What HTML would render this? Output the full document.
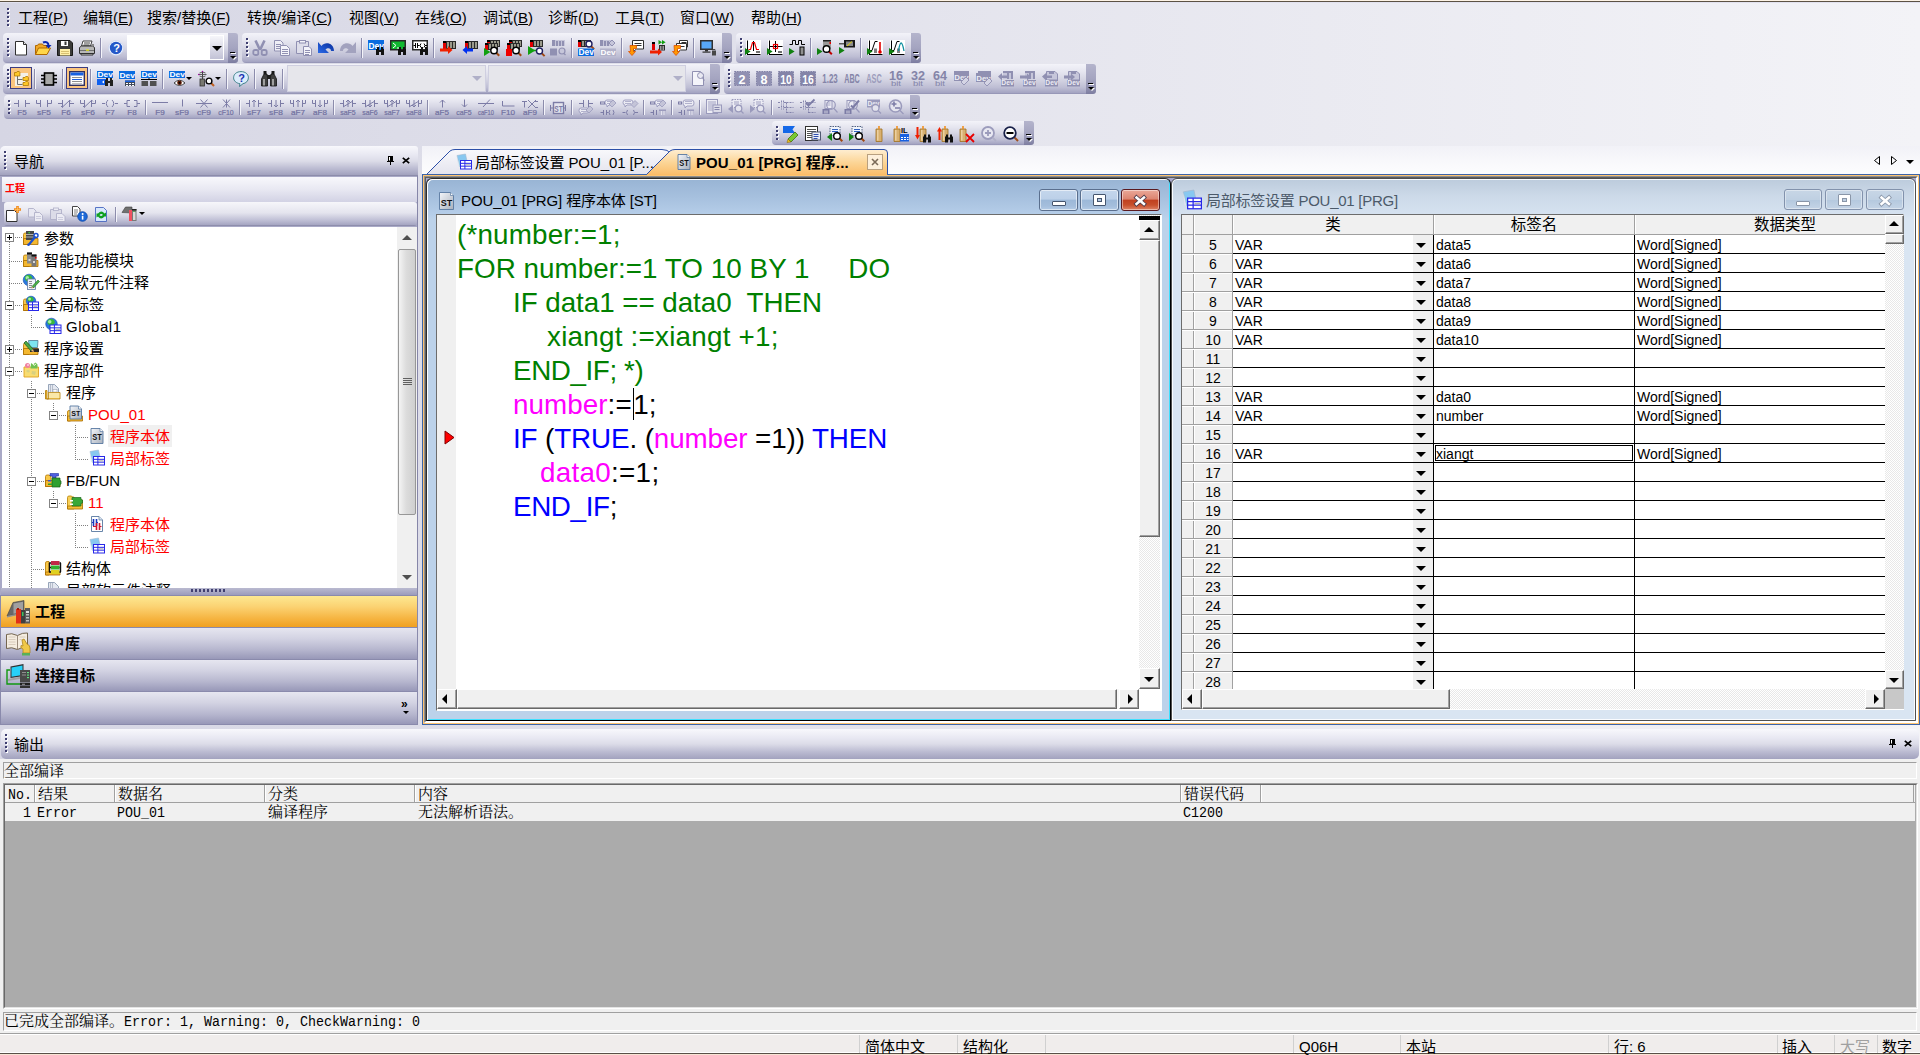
<!DOCTYPE html>
<html lang="zh-CN"><head><meta charset="utf-8"><title>GX Works2</title><style>
html,body{margin:0;padding:0;}
body{width:1920px;height:1055px;overflow:hidden;position:relative;background:linear-gradient(to right,#d6d6e4 0%,#f3f3f7 100%);font-family:"Liberation Sans","Noto Sans CJK SC",sans-serif;font-size:15px;color:#000;}
div{position:absolute;box-sizing:border-box;}
svg{position:absolute;overflow:visible;}
.gt{font-size:14px;letter-spacing:0px}
.t{white-space:pre;line-height:22px;height:22px;}
.tb{background:linear-gradient(to bottom,#f3f3f9 0%,#e6e6f0 25%,#d6d6e4 50%,#bebed4 78%,#a4a4c2 96%,#8e8eb0 100%);border-radius:4px 0 0 4px;}
.tbend{background:linear-gradient(to bottom,#b4b4cc 0%,#a4a4c0 50%,#8c8cac 85%,#7c7ca0 100%);border-radius:0 3px 3px 0;}
.grip{width:3px;background-image:repeating-linear-gradient(to bottom,#3e3e70 0,#3e3e70 2px,transparent 2px,transparent 4px),repeating-linear-gradient(to bottom,transparent 0,transparent 1px,#fff 1px,#fff 3px,transparent 3px,transparent 4px);background-size:2px 100%,2px 100%;background-position:0 0,1px 0;background-repeat:no-repeat;}
.sep{width:2px;background:linear-gradient(to right,#8c8cac 0 1px,#f4f4fa 1px 2px);}
.code{font-family:"Liberation Sans",sans-serif;font-size:27.8px;line-height:36px;height:34px;white-space:pre;}
.g{color:#008000}.b{color:#0000ff}.m{color:#ff00ff}.k{color:#000}
.ui{font-family:"Liberation Sans","Noto Sans CJK SC",sans-serif;}
.song{font-family:"Liberation Mono","Noto Serif CJK SC",serif;font-size:15px;white-space:pre;line-height:21px;height:21px;}
.song i{font-style:normal;font-size:13.33px;display:inline-block;transform:scaleY(1.15);transform-origin:50% 74%;}
</style></head><body>
<div style="left:0px;top:0px;width:1920px;height:1px;background:#fdf3e6"></div>
<div style="left:0px;top:1px;width:1920px;height:1px;background:#5c5244"></div>
<div style="left:0px;top:2px;width:1920px;height:1px;background:#e2e2f0"></div>
<div class="grip" style="left:7px;top:8px;width:3px;height:19px;"></div>
<div class="t menu" style="left:18px;top:7px;">工程(<u>P</u>)</div>
<div class="t menu" style="left:83px;top:7px;">编辑(<u>E</u>)</div>
<div class="t menu" style="left:147px;top:7px;">搜索/替换(<u>F</u>)</div>
<div class="t menu" style="left:247px;top:7px;">转换/编译(<u>C</u>)</div>
<div class="t menu" style="left:349px;top:7px;">视图(<u>V</u>)</div>
<div class="t menu" style="left:415px;top:7px;">在线(<u>O</u>)</div>
<div class="t menu" style="left:483px;top:7px;">调试(<u>B</u>)</div>
<div class="t menu" style="left:548px;top:7px;">诊断(<u>D</u>)</div>
<div class="t menu" style="left:615px;top:7px;">工具(<u>T</u>)</div>
<div class="t menu" style="left:680px;top:7px;">窗口(<u>W</u>)</div>
<div class="t menu" style="left:751px;top:7px;">帮助(<u>H</u>)</div>
<div class="tb" style="left:3px;top:33px;width:225px;height:30px;"></div>
<div class="tbend" style="left:228px;top:33px;width:10px;height:30px;"><div style="left:2px;top:19px;width:5px;height:1px;background:#000"></div><div style="left:3px;top:20px;width:5px;height:1px;background:#fff"></div><div style="left:3px;top:24px;width:0;height:0;border-left:3px solid transparent;border-right:3px solid transparent;border-top:3px solid #fff"></div><div style="left:2px;top:23px;width:0;height:0;border-left:3px solid transparent;border-right:3px solid transparent;border-top:3px solid #000"></div></div>
<div class="grip" style="left:7px;top:38px;width:3px;height:20px;"></div>
<svg style="left:13px;top:40px" width="16" height="16" viewBox="0 0 16 16"><path d="M2.5 1.5h8l3 3v10.5h-11z" fill="#fff" stroke="#303030" stroke-width="1" /><path d="M10.5 1.5v3h3" fill="#e8e8e8" stroke="#303030" stroke-width="1" /></svg>
<svg style="left:35px;top:40px" width="16" height="16" viewBox="0 0 16 16"><path d="M0.5 14.5v-9h2l1-1.5h4l1 1.5h3v3" fill="#f0a828" stroke="#b06800" stroke-width="1" /><path d="M0.5 14.5l3-6.5h12l-3.5 6.5z" fill="#ffd64a" stroke="#b06800" stroke-width="1" /><path d="M8 2.5c3-1.5 5.5 0 5.5 3" fill="none" stroke="#0828b0" stroke-width="2" /><path d="M10.5 5h6l-3 3.5z" fill="#0828b0" stroke="none" stroke-width="1" /></svg>
<svg style="left:57px;top:40px" width="16" height="16" viewBox="0 0 16 16"><path d="M0.5 0.5h12.5l2.5 2.5v12.5h-15z" fill="#3a3a38" stroke="#181818" stroke-width="1" /><rect x="4" y="1" width="7" height="5" fill="#fff" /><rect x="7.5" y="1.5" width="2" height="3.5" fill="#3a3a38" /><rect x="3" y="9" width="10" height="6.5" fill="#fff0a8" /><rect x="4" y="11" width="8" height="1" fill="#d8c070" /><rect x="4" y="13" width="8" height="1" fill="#d8c070" /></svg>
<svg style="left:79px;top:40px" width="16" height="16" viewBox="0 0 16 16"><path d="M4 1h9l-1.5 5h-9z" fill="#fff" stroke="#404040" stroke-width="1" /><path d="M5 3h6M4.5 5h6" fill="none" stroke="#404040" stroke-width="1" /><path d="M0.5 7.5l2-1.5h11l2 1.5v6h-15z" fill="#b8b8b8" stroke="#303030" stroke-width="1" /><rect x="1" y="10" width="14" height="1" fill="#707070" /><rect x="7" y="9.5" width="3" height="1.2" fill="#f0f000" /><path d="M2 13.5h12v1.5h-12z" fill="#d8d8d8" stroke="#303030" stroke-width="1" /><rect x="13" y="4" width="2" height="2" fill="#888" /></svg>
<div class="sep" style="left:100px;top:38px;width:2px;height:20px;"></div>
<svg style="left:108px;top:40px" width="16" height="16" viewBox="0 0 16 16"><circle cx="8" cy="8" r="7.3" fill="#fff" stroke="#c8d4f0" stroke-width="0.8"/><circle cx="8" cy="8" r="6.2" fill="#2458c8" stroke="none" stroke-width="1"/><text x="5.2" y="12" font-family="Liberation Sans,sans-serif" font-size="11" fill="#fff" font-weight="bold">?</text></svg>
<div style="left:127px;top:35px;width:97px;height:25px;background:#fff"></div>
<div style="left:210px;top:36px;width:13px;height:23px;background:linear-gradient(to bottom,#f6f6fa,#dcdce8 50%,#c2c2d6)"></div>
<div style="left:212px;top:46px;width:0px;height:0px;border-left:5px solid transparent;border-right:5px solid transparent;border-top:5px solid #000;width:0;height:0"></div>
<div class="tb" style="left:242px;top:33px;width:480px;height:30px;"></div>
<div class="tbend" style="left:722px;top:33px;width:10px;height:30px;"><div style="left:2px;top:19px;width:5px;height:1px;background:#000"></div><div style="left:3px;top:20px;width:5px;height:1px;background:#fff"></div><div style="left:3px;top:24px;width:0;height:0;border-left:3px solid transparent;border-right:3px solid transparent;border-top:3px solid #fff"></div><div style="left:2px;top:23px;width:0;height:0;border-left:3px solid transparent;border-right:3px solid transparent;border-top:3px solid #000"></div></div>
<div class="grip" style="left:246px;top:38px;width:3px;height:20px;"></div>
<svg style="left:252px;top:40px" width="16" height="16" viewBox="0 0 16 16"><path d="M3.500 0.500l4.500 9.500M12.500 0.500l-4.500 9.500" fill="none" stroke="#9090b2" stroke-width="2.6" /><rect x="1.3" y="10" width="5" height="5" fill="none" rx="1.800" stroke="#9090b2" stroke-width="1.800"/><rect x="9.7" y="10" width="5" height="5" fill="none" rx="1.800" stroke="#9090b2" stroke-width="1.800"/></svg>
<svg style="left:274px;top:40px" width="16" height="16" viewBox="0 0 16 16"><path d="M0.5 0.5h6l2.5 2.5v8h-8.5z" fill="#eeeef6" stroke="#9090b2" stroke-width="1" /><path d="M2 4.500h5M2 6.500h5M2 8.500h4" fill="none" stroke="#9090b2" stroke-width="1" /><path d="M6.5 5.5h6l3 3v7h-9z" fill="#f4f4fa" stroke="#9090b2" stroke-width="1" /><path d="M8 9.500h6M8 11.500h6M8 13.500h6" fill="none" stroke="#9090b2" stroke-width="1" /></svg>
<svg style="left:296px;top:40px" width="16" height="16" viewBox="0 0 16 16"><path d="M0.5 1.5h12v12h-12z" fill="#dedeea" stroke="#9090b2" stroke-width="1" /><rect x="3.5" y="0.5" width="6" height="2.5" fill="#f4f4fa" stroke="#9090b2"/><path d="M7.5 6.5h5.5l2.5 2.5v6.5h-8z" fill="#f4f4fa" stroke="#9090b2" stroke-width="1" /><path d="M9 10.500h5M9 12.500h5M9 14.500h4" fill="none" stroke="#9090b2" stroke-width="1" /></svg>
<svg style="left:318px;top:40px" width="16" height="16" viewBox="0 0 16 16"><defs><linearGradient id="ug" x1="0" y1="1" x2="1" y2="0"><stop offset="0" stop-color="#2a6ae8"/><stop offset="1" stop-color="#082c98"/></linearGradient></defs><path d="M0 2v11h11l-3.500-3.500c2-2.200 5.500-1.800 5.500 1.500h3c0-8-9-10-12.500-5z" fill="url(#ug)" stroke="none" stroke-width="1" /></svg>
<svg style="left:340px;top:40px" width="16" height="16" viewBox="0 0 16 16"><path d="M16 2v11h-11l3.500-3.500c-2-2.200-5.500-1.800-5.500 1.500h-3c0-8 9-10 12.500-5z" fill="#a2a2be" stroke="none" stroke-width="1" /></svg>
<div class="sep" style="left:361px;top:38px;width:2px;height:20px;"></div>
<svg style="left:368px;top:40px" width="16" height="16" viewBox="0 0 16 16"><rect x="0" y="0" width="16" height="10" fill="#0a6be0" /><text x="0.5" y="8.7" font-family="Liberation Sans,sans-serif" font-size="8.5" fill="#fff" font-weight="bold" textLength="15.4" lengthAdjust="spacingAndGlyphs">Dev</text><rect x="8" y="9" width="3" height="6" fill="#111" /><rect x="13" y="9" width="3" height="6" fill="#111" /><rect x="9" y="7" width="2" height="3" fill="#111" /><rect x="13" y="7" width="2" height="3" fill="#111" /><rect x="11" y="10" width="2" height="2" fill="#111" /></svg>
<svg style="left:390px;top:40px" width="16" height="16" viewBox="0 0 16 16"><rect x="0" y="0" width="16" height="10.5" fill="#282828" /><rect x="1.5" y="1.5" width="13" height="7.5" fill="#10b830" /><path d="M3 3l3 2.5l-3 2.5M7 8h4" fill="none" stroke="#fff" stroke-width="1" /><rect x="8" y="9" width="3" height="6" fill="#111" /><rect x="13" y="9" width="3" height="6" fill="#111" /><rect x="9" y="7" width="2" height="3" fill="#111" /><rect x="13" y="7" width="2" height="3" fill="#111" /><rect x="11" y="10" width="2" height="2" fill="#111" /></svg>
<svg style="left:412px;top:40px" width="16" height="16" viewBox="0 0 16 16"><rect x="0" y="0" width="16" height="10.5" fill="#282828" /><rect x="1.5" y="1.5" width="13" height="7.5" fill="#fff" /><path d="M1.500 5.500h2M3.500 3v5M5.500 3v5M5.500 5.500h2M9 3.500q-2 2 0 4M12 3.500q2 2 0 4M13 5.500h2" fill="none" stroke="#000" stroke-width="1" /><rect x="8" y="9" width="3" height="6" fill="#111" /><rect x="13" y="9" width="3" height="6" fill="#111" /><rect x="9" y="7" width="2" height="3" fill="#111" /><rect x="13" y="7" width="2" height="3" fill="#111" /><rect x="11" y="10" width="2" height="2" fill="#111" /></svg>
<div class="sep" style="left:433px;top:38px;width:2px;height:20px;"></div>
<svg style="left:440px;top:40px" width="16" height="16" viewBox="0 0 16 16"><rect x="3" y="1" width="13" height="8" fill="#2a2a2a" /><rect x="3" y="3" width="3" height="6" fill="#e00000" /><rect x="3" y="1" width="3" height="2" fill="#000" /><rect x="7" y="2" width="2" height="6" fill="#9a9a8c" /><rect x="10" y="2" width="2" height="6" fill="#9a9a8c" /><rect x="13" y="2" width="2" height="6" fill="#9a9a8c" /><path d="M0 8.500h8v-2.500l4.500 4l-4.500 4v-2.500h-8z" fill="#f02000" stroke="none" stroke-width="1" /></svg>
<svg style="left:462px;top:40px" width="16" height="16" viewBox="0 0 16 16"><rect x="3" y="1" width="13" height="8" fill="#2a2a2a" /><rect x="3" y="3" width="3" height="6" fill="#e00000" /><rect x="3" y="1" width="3" height="2" fill="#000" /><rect x="7" y="2" width="2" height="6" fill="#9a9a8c" /><rect x="10" y="2" width="2" height="6" fill="#9a9a8c" /><rect x="13" y="2" width="2" height="6" fill="#9a9a8c" /><path d="M11 8.500h-6v-2.500l-4.500 4l4.500 4v-2.500h6z" fill="#0030f0" stroke="none" stroke-width="1" /></svg>
<svg style="left:484px;top:40px" width="16" height="16" viewBox="0 0 16 16"><rect x="3" y="0" width="13" height="7" fill="#2a2a2a" /><rect x="3" y="2" width="3" height="5" fill="#e00000" /><rect x="3" y="0" width="3" height="2" fill="#000" /><rect x="7" y="1" width="2" height="5" fill="#9a9a8c" /><rect x="10" y="1" width="2" height="5" fill="#9a9a8c" /><rect x="13" y="1" width="2" height="5" fill="#9a9a8c" /><rect x="1" y="3" width="13" height="7" fill="#2a2a2a" /><rect x="1" y="5" width="3" height="5" fill="#e00000" /><rect x="1" y="3" width="3" height="2" fill="#000" /><rect x="5" y="4" width="2" height="5" fill="#9a9a8c" /><rect x="8" y="4" width="2" height="5" fill="#9a9a8c" /><rect x="11" y="4" width="2" height="5" fill="#9a9a8c" /><path d="M0 8v8l6.4 -4.0z" fill="#10a010" stroke="none" stroke-width="1" /><path d="M12.24 12.74l3 3" fill="none" stroke="#a04810" stroke-width="2" /><circle cx="10" cy="10.5" r="3.2" fill="#fff" stroke="#000" stroke-width="1.4"/></svg>
<svg style="left:506px;top:40px" width="16" height="16" viewBox="0 0 16 16"><rect x="3" y="0" width="13" height="7" fill="#2a2a2a" /><rect x="3" y="2" width="3" height="5" fill="#e00000" /><rect x="3" y="0" width="3" height="2" fill="#000" /><rect x="7" y="1" width="2" height="5" fill="#9a9a8c" /><rect x="10" y="1" width="2" height="5" fill="#9a9a8c" /><rect x="13" y="1" width="2" height="5" fill="#9a9a8c" /><rect x="1" y="3" width="13" height="7" fill="#2a2a2a" /><rect x="1" y="5" width="3" height="5" fill="#e00000" /><rect x="1" y="3" width="3" height="2" fill="#000" /><rect x="5" y="4" width="2" height="5" fill="#9a9a8c" /><rect x="8" y="4" width="2" height="5" fill="#9a9a8c" /><rect x="11" y="4" width="2" height="5" fill="#9a9a8c" /><rect x="0" y="9" width="6" height="7" fill="#f00000" /><path d="M12.24 12.74l3 3" fill="none" stroke="#a04810" stroke-width="2" /><circle cx="10" cy="10.5" r="3.2" fill="#fff" stroke="#000" stroke-width="1.4"/></svg>
<svg style="left:528px;top:40px" width="16" height="16" viewBox="0 0 16 16"><rect x="2" y="0" width="13" height="7" fill="#2a2a2a" /><rect x="2" y="2" width="3" height="5" fill="#e00000" /><rect x="2" y="0" width="3" height="2" fill="#000" /><rect x="6" y="1" width="2" height="5" fill="#9a9a8c" /><rect x="9" y="1" width="2" height="5" fill="#9a9a8c" /><rect x="12" y="1" width="2" height="5" fill="#9a9a8c" /><path d="M0 6v9l7.2 -4.5z" fill="#10a010" stroke="none" stroke-width="1" /><path d="M5 10.500h4" fill="none" stroke="#10a010" stroke-width="1.5" /><path d="M13.6 13.1l3 3" fill="none" stroke="#a04810" stroke-width="2" /><circle cx="11.5" cy="11" r="3" fill="#fff" stroke="#202060" stroke-width="1.4"/></svg>
<svg style="left:550px;top:40px" width="16" height="16" viewBox="0 0 16 16"><rect x="2" y="0" width="13" height="6" fill="#c6c6da" /><rect x="2" y="0" width="3" height="6" fill="#9090b2" /><rect x="6" y="1" width="2" height="5" fill="#9090b2" /><rect x="9" y="1" width="2" height="5" fill="#9090b2" /><rect x="12" y="1" width="2" height="5" fill="#9090b2" /><rect x="0" y="8.5" width="7" height="7" fill="#9090b2" /><circle cx="12" cy="11" r="3" fill="#c6c6da" stroke="#9090b2" stroke-width="1.2"/><path d="M14 13.500l1.500 1.500" fill="none" stroke="#9090b2" stroke-width="1.2" /></svg>
<div class="sep" style="left:571px;top:38px;width:2px;height:20px;"></div>
<svg style="left:578px;top:40px" width="16" height="16" viewBox="0 0 16 16"><rect x="0" y="0" width="13" height="7" fill="#2a2a2a" /><rect x="0" y="2" width="3" height="5" fill="#e00000" /><rect x="0" y="0" width="3" height="2" fill="#000" /><rect x="4" y="1" width="2" height="5" fill="#9a9a8c" /><rect x="7" y="1" width="2" height="5" fill="#9a9a8c" /><rect x="10" y="1" width="2" height="5" fill="#9a9a8c" /><path d="M13.1 6.1l3 3" fill="none" stroke="#a04810" stroke-width="2" /><circle cx="11" cy="4" r="3" fill="#fff" stroke="#202060" stroke-width="1.4"/><rect x="0" y="8.5" width="16" height="7.5" fill="#0a6be0" /><text x="0.5" y="14.7" font-family="Liberation Sans,sans-serif" font-size="9" fill="#fff" font-weight="bold" textLength="15.4" lengthAdjust="spacingAndGlyphs">Dev</text></svg>
<svg style="left:600px;top:40px" width="16" height="16" viewBox="0 0 16 16"><rect x="0" y="0" width="12" height="6" fill="#c6c6da" /><rect x="0" y="0" width="3" height="6" fill="#9090b2" /><rect x="4" y="1" width="2" height="5" fill="#9090b2" /><rect x="7" y="1" width="2" height="5" fill="#9090b2" /><path d="M9 3l3-3l3 3l-3 3z" fill="#c6c6da" stroke="#9090b2" stroke-width="1" /><rect x="0" y="8.5" width="16" height="7.5" fill="#b2b2ca" /><text x="0.5" y="14.8" font-family="Liberation Sans,sans-serif" font-size="8" fill="#fff" font-weight="bold" textLength="15" lengthAdjust="spacingAndGlyphs">Dev</text></svg>
<div class="sep" style="left:621px;top:38px;width:2px;height:20px;"></div>
<svg style="left:628px;top:40px" width="16" height="16" viewBox="0 0 16 16"><path d="M4.5 0.5h11v8.5h-7l-3 2.500v-2.500h-1z" fill="#fff" stroke="#303030" stroke-width="1" /><path d="M6.500 3.500h7M6.500 5.500h7" fill="none" stroke="#303030" stroke-width="1" /><path d="M2 5.500h6.500v3h-3v3h2l-3.500 4l-3.500-4h2z" fill="#ff9800" stroke="#e05000" stroke-width="0.8" /></svg>
<svg style="left:650px;top:40px" width="16" height="16" viewBox="0 0 16 16"><rect x="2" y="3" width="3" height="7" fill="#e00000" /><rect x="2" y="2" width="3" height="2" fill="#000" /><rect x="9" y="5" width="6" height="5.5" fill="#2a2a2a" /><rect x="10" y="6" width="1.5" height="4" fill="#999" /><rect x="12.5" y="6" width="1.5" height="4" fill="#999" /><path d="M0 10.500h8v-2l4 3.500l-4 3.500v-2h-8z" fill="#f02000" stroke="none" stroke-width="1" /><path d="M8.5 0v4.5l3.6 -2.25z" fill="#10a010" stroke="none" stroke-width="1" /><path d="M12 0v4.5l3.6 -2.25z" fill="#10a010" stroke="none" stroke-width="1" /></svg>
<svg style="left:672px;top:40px" width="16" height="16" viewBox="0 0 16 16"><path d="M7.5 0.5h8v6.5h-4l-3 2.500v-2.500h-1z" fill="#fff" stroke="#303030" stroke-width="1" /><path d="M4.5 3.5h10v6.5h-6l-3 2.500v-2.500h-1z" fill="#fff" stroke="#303030" stroke-width="1" /><path d="M9.500 2.500h5M6.500 6.500h6" fill="none" stroke="#303030" stroke-width="1" /><path d="M2 5.500h6.500v3h-3v3h2l-3.500 4l-3.500-4h2z" fill="#ff9800" stroke="#e05000" stroke-width="0.8" /></svg>
<div class="sep" style="left:693px;top:38px;width:2px;height:20px;"></div>
<svg style="left:700px;top:40px" width="16" height="16" viewBox="0 0 16 16"><rect x="0" y="0" width="13" height="10" fill="#303030" /><rect x="1.5" y="1.5" width="10" height="7" fill="#58a8f8" /><rect x="5" y="10" width="3" height="1.5" fill="#303030" /><rect x="2.5" y="11.5" width="8" height="1.2" fill="#303030" /><path d="M12 11h4v4.500h-4z" fill="#484848" stroke="none" stroke-width="1" /><path d="M13 11v-1.500h2v1.500" fill="none" stroke="#484848" stroke-width="1" /></svg>
<div class="tb" style="left:736px;top:33px;width:175px;height:30px;"></div>
<div class="tbend" style="left:911px;top:33px;width:10px;height:30px;"><div style="left:2px;top:19px;width:5px;height:1px;background:#000"></div><div style="left:3px;top:20px;width:5px;height:1px;background:#fff"></div><div style="left:3px;top:24px;width:0;height:0;border-left:3px solid transparent;border-right:3px solid transparent;border-top:3px solid #fff"></div><div style="left:2px;top:23px;width:0;height:0;border-left:3px solid transparent;border-right:3px solid transparent;border-top:3px solid #000"></div></div>
<div class="grip" style="left:740px;top:38px;width:3px;height:20px;"></div>
<svg style="left:745px;top:40px" width="16" height="16" viewBox="0 0 16 16"><rect x="1" y="0" width="15" height="15" fill="#fff" /><path d="M2.500 0.500v14M2 14.500h13.500" fill="none" stroke="#000" stroke-width="1" /><path d="M8.500 1v10" fill="none" stroke="#000" stroke-width="1" /><path d="M3.500 9.500h2l2-7h2l2 7h2.500" fill="none" stroke="#f00000" stroke-width="1.2" /><path d="M0 8v7l5.6000000000000005 -3.5z" fill="#108010" stroke="none" stroke-width="1" /><rect x="11" y="11" width="4" height="2" fill="#707070" /></svg>
<svg style="left:767px;top:40px" width="16" height="16" viewBox="0 0 16 16"><rect x="1" y="0" width="15" height="15" fill="#fff" /><path d="M2.500 0.500v14M2 14.500h13.500" fill="none" stroke="#000" stroke-width="1" /><path d="M8.500 1v11M3 6.500h12.500" fill="none" stroke="#000" stroke-width="1" /><rect x="6.5" y="4.5" width="4" height="4" fill="none" stroke="#f00000" stroke-width="1.2"/><path d="M0 8v7l5.6000000000000005 -3.5z" fill="#108010" stroke="none" stroke-width="1" /><rect x="11" y="11" width="4" height="2" fill="#707070" /></svg>
<svg style="left:789px;top:40px" width="16" height="16" viewBox="0 0 16 16"><path d="M0.500 4.500h3v-4h3v4h3v-4h3v4h3.500" fill="none" stroke="#000" stroke-width="1" /><path d="M0 8v7l5.6000000000000005 -3.5z" fill="#108010" stroke="none" stroke-width="1" /><rect x="11" y="7" width="4" height="8" fill="#909090" stroke="#000"/></svg>
<div class="sep" style="left:810px;top:38px;width:2px;height:20px;"></div>
<svg style="left:817px;top:40px" width="16" height="16" viewBox="0 0 16 16"><rect x="6" y="0" width="8" height="9" fill="#9a9a9a" /><rect x="6" y="0" width="8" height="1.5" fill="#202020" /><rect x="12.5" y="2" width="1.5" height="2" fill="#e00000" /><path d="M0 8v7l5.6000000000000005 -3.5z" fill="#108010" stroke="none" stroke-width="1" /><path d="M11.809999999999999 11.309999999999999l3 3" fill="none" stroke="#c00000" stroke-width="2" /><circle cx="9.5" cy="9" r="3.3" fill="#fff" stroke="#000" stroke-width="1.4"/></svg>
<svg style="left:839px;top:40px" width="16" height="16" viewBox="0 0 16 16"><rect x="5" y="0" width="11" height="7.5" fill="#181818" /><rect x="7" y="1.5" width="7" height="4.5" fill="#8a8a8a" /><path d="M8 6l5-4.500" fill="none" stroke="#e0d000" stroke-width="1" /><rect x="0" y="3" width="5" height="1.5" fill="#585858" /><path d="M0 7v7l5.6000000000000005 -3.5z" fill="#108010" stroke="none" stroke-width="1" /></svg>
<div class="sep" style="left:860px;top:38px;width:2px;height:20px;"></div>
<svg style="left:867px;top:40px" width="16" height="16" viewBox="0 0 16 16"><rect x="1" y="0" width="15" height="15" fill="#fff" /><path d="M2.500 0.500v14M2 14.500h13.500" fill="none" stroke="#000" stroke-width="1" /><path d="M3 10.500h2l3-9h2.500" fill="none" stroke="#000" stroke-width="1" /><rect x="7" y="8.5" width="3" height="4.5" fill="#808080" /><path d="M13 2v9" fill="none" stroke="#e00000" stroke-width="1.6" /><circle cx="13" cy="12" r="1.8" fill="#e00000" stroke="none" stroke-width="1"/><path d="M0 8v7l5.6000000000000005 -3.5z" fill="#108010" stroke="none" stroke-width="1" /></svg>
<svg style="left:889px;top:40px" width="16" height="16" viewBox="0 0 16 16"><rect x="1" y="0" width="15" height="15" fill="#fff" /><path d="M2.500 0.500v14M2 14.500h13.500" fill="none" stroke="#000" stroke-width="1" /><path d="M3 10.500h2l3-9h2.500" fill="none" stroke="#000" stroke-width="1" /><rect x="8" y="8.5" width="3" height="4.5" fill="#808080" /><path d="M9.500 11q2.500-16 5.500 0" fill="none" stroke="#1090a0" stroke-width="1.3" /><path d="M0 8v7l5.6000000000000005 -3.5z" fill="#108010" stroke="none" stroke-width="1" /></svg>
<div class="tb" style="left:3px;top:64px;width:707px;height:30px;"></div>
<div class="tbend" style="left:710px;top:64px;width:10px;height:30px;"><div style="left:2px;top:19px;width:5px;height:1px;background:#000"></div><div style="left:3px;top:20px;width:5px;height:1px;background:#fff"></div><div style="left:3px;top:24px;width:0;height:0;border-left:3px solid transparent;border-right:3px solid transparent;border-top:3px solid #fff"></div><div style="left:2px;top:23px;width:0;height:0;border-left:3px solid transparent;border-right:3px solid transparent;border-top:3px solid #000"></div></div>
<div class="grip" style="left:7px;top:69px;width:3px;height:20px;"></div>
<div style="left:10px;top:67px;width:22px;height:22px;background:#fbc57e;border:1px solid #3c3c80"></div>
<div style="left:66px;top:67px;width:22px;height:22px;background:#fbc57e;border:1px solid #3c3c80"></div>
<svg style="left:14px;top:71px" width="16" height="16" viewBox="0 0 16 16"><rect x="1" y="2" width="13" height="13" fill="#f4f0e8" /><path d="M3.500 5v8.500h5M3.500 8.500h5" fill="none" stroke="#707070" stroke-width="1" /><path d="M0.500 1.500h2l0.700-1h2l0.700 1v3.500h-5.400z" fill="#ffc828" stroke="#b07800" stroke-width="0.8" /><path d="M9 6.500h2l0.700-1h2l0.700 1v3h-5.400z" fill="#ffc828" stroke="#b07800" stroke-width="0.8" /><path d="M9 11.500h2l0.700-1h2l0.700 1v3h-5.400z" fill="#ffc828" stroke="#b07800" stroke-width="0.8" /></svg>
<div class="sep" style="left:34px;top:69px;width:2px;height:20px;"></div>
<svg style="left:41px;top:71px" width="16" height="16" viewBox="0 0 16 16"><rect x="3.5" y="2" width="9" height="12" fill="#a8a8a8" stroke="#000" stroke-width="1.6"/><path d="M0 4.500h3M0 8h3M0 11.500h3M13 4.500h3M13 8h3M13 11.500h3" fill="none" stroke="#000" stroke-width="1.6" /></svg>
<div class="sep" style="left:62px;top:69px;width:2px;height:20px;"></div>
<svg style="left:69px;top:71px" width="16" height="16" viewBox="0 0 16 16"><rect x="0.7" y="0.7" width="14.6" height="13.6" fill="#fff" stroke="#303060" stroke-width="1.4"/><rect x="1.5" y="1.5" width="13" height="3" fill="#1860e0" /><path d="M3 6.500h10M3 10.500h10" fill="none" stroke="#909090" stroke-width="1" /><path d="M3 8.500h10" fill="none" stroke="#2060e0" stroke-width="1" /><path d="M3 12.500h10" fill="none" stroke="#c0c0c0" stroke-width="1" /></svg>
<div class="sep" style="left:90px;top:69px;width:2px;height:20px;"></div>
<svg style="left:97px;top:71px" width="16" height="16" viewBox="0 0 16 16"><rect x="0" y="0" width="16" height="7" fill="#0a6be0" /><text x="0.5" y="5.7" font-family="Liberation Sans,sans-serif" font-size="7.8" fill="#fff" font-weight="bold" textLength="15.4" lengthAdjust="spacingAndGlyphs">Dev</text><rect x="0" y="8" width="9" height="6" fill="#1060f0" /><path d="M5 11l2-1.500v3z" fill="#fff" stroke="none" stroke-width="1" /><rect x="8" y="9" width="3" height="6" fill="#202020" /><rect x="13" y="9" width="3" height="6" fill="#202020" /><rect x="9" y="7" width="2" height="3" fill="#202020" /><rect x="13" y="7" width="2" height="3" fill="#202020" /><rect x="11" y="10" width="2" height="2" fill="#202020" /></svg>
<svg style="left:119px;top:71px" width="16" height="16" viewBox="0 0 16 16"><rect x="0" y="0" width="16" height="8" fill="#0a6be0" /><text x="0.5" y="6.7" font-family="Liberation Sans,sans-serif" font-size="8" fill="#fff" font-weight="bold" textLength="15.4" lengthAdjust="spacingAndGlyphs">Dev</text><rect x="6" y="9.5" width="10" height="5.5" fill="#404858" /><rect x="6" y="9.5" width="10" height="1.5" fill="#1860e0" /><path d="M7 12.500h2M10 12.500h2M13 12.500h2M7 14.500h2M10 14.500h2M13 14.500h2" fill="none" stroke="#fff" stroke-width="1" /></svg>
<svg style="left:141px;top:71px" width="16" height="16" viewBox="0 0 16 16"><rect x="0" y="0" width="16" height="7" fill="#0a6be0" /><text x="0.5" y="5.7" font-family="Liberation Sans,sans-serif" font-size="7.8" fill="#fff" font-weight="bold" textLength="15.4" lengthAdjust="spacingAndGlyphs">Dev</text><path d="M8 7v2M0 8.500h16" fill="none" stroke="#000" stroke-width="1" /><rect x="0.5" y="10" width="6.5" height="5" fill="#505050" /><rect x="9" y="10" width="6.5" height="5" fill="#505050" /></svg>
<div class="sep" style="left:162px;top:69px;width:2px;height:20px;"></div>
<svg style="left:169px;top:71px" width="16" height="16" viewBox="0 0 16 16"><rect x="0" y="0" width="16" height="7" fill="#0a6be0" /><text x="0.5" y="5.7" font-family="Liberation Sans,sans-serif" font-size="7.8" fill="#fff" font-weight="bold" textLength="15.4" lengthAdjust="spacingAndGlyphs">Dev</text><path d="M5 12q5.500-5.500 11 0q-5.500 5-11 0z" fill="#fff" stroke="#303030" stroke-width="0.9" /><circle cx="10.5" cy="11.8" r="2.3" fill="#601800" stroke="none" stroke-width="1"/><circle cx="10.5" cy="11.8" r="1" fill="#000" stroke="none" stroke-width="1"/></svg>
<svg style="left:198px;top:71px" width="16" height="16" viewBox="0 0 16 16"><path d="M4.500 0v8" fill="none" stroke="#404040" stroke-width="1" /><path d="M0.500 3.500h8M1.500 2q3-2 6 0M1.500 5q3 2 6 0" fill="none" stroke="#505050" stroke-width="0.9" /><circle cx="4.5" cy="0.5" r="0.7" fill="#a000a0" stroke="none" stroke-width="1"/><circle cx="0.7" cy="3.5" r="0.7" fill="#a000a0" stroke="none" stroke-width="1"/><rect x="2" y="8" width="4.5" height="7" fill="#787870" stroke="#303030" stroke-width="0.8"/><path d="M13.03 12.03l3 3" fill="none" stroke="#c06020" stroke-width="2" /><circle cx="11" cy="10" r="2.9" fill="#fff" stroke="#000" stroke-width="1.4"/></svg>
<div class="sep" style="left:226px;top:69px;width:2px;height:20px;"></div>
<svg style="left:233px;top:71px" width="16" height="16" viewBox="0 0 16 16"><path d="M8 0.600c4.500 0 7.400 2.600 7.400 6.200c0 3.200-2.500 5.400-5.400 5.900l-3.500 2.800l0.400-2.800c-3.400-0.500-6.300-2.700-6.300-5.900c0-3.600 2.900-6.200 7.400-6.200z" fill="#dcecfc" stroke="#307880" stroke-width="0.9" /><text x="5.2" y="11" font-family="Liberation Sans,sans-serif" font-size="11" fill="#2030b0" font-weight="bold" font-family="Liberation Serif,serif">?</text></svg>
<div class="sep" style="left:254px;top:69px;width:2px;height:20px;"></div>
<svg style="left:261px;top:71px" width="16" height="16" viewBox="0 0 16 16"><path d="M0.500 15v-7l2.500-5h3l0.500 3v9z" fill="#404040" stroke="#101010" stroke-width="0.8" /><path d="M15.500 15v-7l-2.500-5h-3l-0.500 3v9z" fill="#404040" stroke="#101010" stroke-width="0.8" /><rect x="2.5" y="0" width="3" height="3" fill="#181818" /><rect x="10.5" y="0" width="3" height="3" fill="#181818" /><rect x="6" y="4" width="4" height="4" fill="#202020" /><rect x="2" y="8" width="2" height="6.5" fill="#a0a0a0" /><rect x="11" y="8" width="2" height="6.5" fill="#a0a0a0" /></svg>
<div class="sep" style="left:282px;top:69px;width:2px;height:20px;"></div>
<div style="left:186px;top:77px;width:0px;height:0px;border-left:3px solid transparent;border-right:3px solid transparent;border-top:3px solid #000;width:0;height:0"></div>
<div style="left:215px;top:77px;width:0px;height:0px;border-left:3px solid transparent;border-right:3px solid transparent;border-top:3px solid #000;width:0;height:0"></div>
<div style="left:287px;top:65px;width:199px;height:27px;background:#e6e6eb;border:1px solid #cfcfe0"></div>
<div style="left:488px;top:65px;width:198px;height:27px;background:#e6e6eb;border:1px solid #cfcfe0"></div>
<div style="left:472px;top:76px;width:0px;height:0px;border-left:5px solid transparent;border-right:5px solid transparent;border-top:5px solid #b0b0c8;width:0;height:0"></div>
<div style="left:673px;top:76px;width:0px;height:0px;border-left:5px solid transparent;border-right:5px solid transparent;border-top:5px solid #b0b0c8;width:0;height:0"></div>
<svg style="left:692px;top:71px" width="16" height="16" viewBox="0 0 16 16"><path d="M0.500 0.500h8l3 3v11h-11z" fill="#f4f4fa" stroke="#9090b2" stroke-width="1" /><circle cx="8.5" cy="4.5" r="3" fill="#e8e8f2" stroke="#9090b2" stroke-width="1"/><path d="M10.500 7l2 2.500" fill="none" stroke="#9090b2" stroke-width="1.2" /></svg>
<div class="tb" style="left:724px;top:64px;width:362px;height:30px;"></div>
<div class="tbend" style="left:1086px;top:64px;width:10px;height:30px;"><div style="left:2px;top:19px;width:5px;height:1px;background:#000"></div><div style="left:3px;top:20px;width:5px;height:1px;background:#fff"></div><div style="left:3px;top:24px;width:0;height:0;border-left:3px solid transparent;border-right:3px solid transparent;border-top:3px solid #fff"></div><div style="left:2px;top:23px;width:0;height:0;border-left:3px solid transparent;border-right:3px solid transparent;border-top:3px solid #000"></div></div>
<div class="grip" style="left:728px;top:69px;width:3px;height:20px;"></div>
<svg style="left:734px;top:71px" width="16" height="16" viewBox="0 0 16 16"><rect x="0.5" y="0.5" width="15" height="14" fill="#9090b2" stroke="#8484a8" stroke-dasharray="1.5 1" stroke-width="1"/><text x="8" y="12.5" font-family="Liberation Sans,sans-serif" font-size="12.5" fill="#fff" font-weight="bold" text-anchor="middle" textLength="7" lengthAdjust="spacingAndGlyphs">2</text></svg>
<svg style="left:756px;top:71px" width="16" height="16" viewBox="0 0 16 16"><rect x="0.5" y="0.5" width="15" height="14" fill="#9090b2" stroke="#8484a8" stroke-dasharray="1.5 1" stroke-width="1"/><text x="8" y="12.5" font-family="Liberation Sans,sans-serif" font-size="12.5" fill="#fff" font-weight="bold" text-anchor="middle" textLength="7" lengthAdjust="spacingAndGlyphs">8</text></svg>
<svg style="left:778px;top:71px" width="16" height="16" viewBox="0 0 16 16"><rect x="0.5" y="0.5" width="15" height="14" fill="#8484a8" stroke="#8484a8" stroke-dasharray="1.5 1" stroke-width="1"/><text x="8" y="12.5" font-family="Liberation Sans,sans-serif" font-size="12.5" fill="#fff" font-weight="bold" text-anchor="middle" textLength="11.5" lengthAdjust="spacingAndGlyphs">10</text></svg>
<svg style="left:800px;top:71px" width="16" height="16" viewBox="0 0 16 16"><rect x="0.5" y="0.5" width="15" height="14" fill="#8484a8" stroke="#8484a8" stroke-dasharray="1.5 1" stroke-width="1"/><text x="8" y="12.5" font-family="Liberation Sans,sans-serif" font-size="12.5" fill="#fff" font-weight="bold" text-anchor="middle" textLength="11.5" lengthAdjust="spacingAndGlyphs">16</text></svg>
<svg style="left:822px;top:71px" width="16" height="16" viewBox="0 0 16 16"><text x="8" y="12" font-family="Liberation Sans,sans-serif" font-size="12" fill="#8484a8" font-weight="bold" text-anchor="middle" textLength="15.500" lengthAdjust="spacingAndGlyphs">1.23</text></svg>
<svg style="left:844px;top:71px" width="16" height="16" viewBox="0 0 16 16"><text x="8" y="12" font-family="Liberation Sans,sans-serif" font-size="12" fill="#8484a8" font-weight="bold" text-anchor="middle" textLength="15.500" lengthAdjust="spacingAndGlyphs">ABC</text></svg>
<svg style="left:866px;top:71px" width="16" height="16" viewBox="0 0 16 16"><text x="8" y="12" font-family="Liberation Sans,sans-serif" font-size="12" fill="#9c9cbc" font-weight="bold" text-anchor="middle" textLength="15.500" lengthAdjust="spacingAndGlyphs">ASC</text></svg>
<svg style="left:888px;top:71px" width="16" height="16" viewBox="0 0 16 16"><text x="8" y="8.7" font-family="Liberation Sans,sans-serif" font-size="12.5" fill="#8484a8" font-weight="bold" text-anchor="middle" textLength="14" lengthAdjust="spacingAndGlyphs">16</text><text x="8" y="14.7" font-family="Liberation Sans,sans-serif" font-size="7.5" fill="#8484a8" text-anchor="middle" textLength="10" lengthAdjust="spacingAndGlyphs">bit</text></svg>
<svg style="left:910px;top:71px" width="16" height="16" viewBox="0 0 16 16"><text x="8" y="8.7" font-family="Liberation Sans,sans-serif" font-size="12.5" fill="#8484a8" font-weight="bold" text-anchor="middle" textLength="14" lengthAdjust="spacingAndGlyphs">32</text><text x="8" y="14.7" font-family="Liberation Sans,sans-serif" font-size="7.5" fill="#8484a8" text-anchor="middle" textLength="10" lengthAdjust="spacingAndGlyphs">bit</text></svg>
<svg style="left:932px;top:71px" width="16" height="16" viewBox="0 0 16 16"><text x="8" y="8.7" font-family="Liberation Sans,sans-serif" font-size="12.5" fill="#8484a8" font-weight="bold" text-anchor="middle" textLength="14" lengthAdjust="spacingAndGlyphs">64</text><text x="8" y="14.7" font-family="Liberation Sans,sans-serif" font-size="7.5" fill="#8484a8" text-anchor="middle" textLength="10" lengthAdjust="spacingAndGlyphs">bit</text></svg>
<svg style="left:954px;top:71px" width="16" height="16" viewBox="0 0 16 16"><rect x="0" y="0" width="15" height="10" fill="#9090b2" /><text x="0.3" y="8.8" font-family="Liberation Sans,sans-serif" font-size="8" fill="#ececf4" font-weight="bold" textLength="14.4" lengthAdjust="spacingAndGlyphs">Dev</text><path d="M7 11l5-5l3 3l-5 5z" fill="#d4d4e4" stroke="#9090b2" stroke-width="0.9" /></svg>
<svg style="left:976px;top:71px" width="16" height="16" viewBox="0 0 16 16"><rect x="2" y="0" width="13" height="3" fill="#9090b2" /><rect x="0" y="2" width="15" height="9" fill="#9090b2" /><text x="0.3" y="9.8" font-family="Liberation Sans,sans-serif" font-size="8" fill="#ececf4" font-weight="bold" textLength="14.4" lengthAdjust="spacingAndGlyphs">Dev</text><path d="M8 12l5-5l3 3l-5 5z" fill="#d4d4e4" stroke="#9090b2" stroke-width="0.9" /></svg>
<svg style="left:998px;top:71px" width="16" height="16" viewBox="0 0 16 16"><rect x="5" y="0" width="10" height="8" fill="#c6c6da" /><rect x="5" y="0" width="10" height="2" fill="#9090b2" /><rect x="9" y="0" width="2" height="8" fill="#9090b2" /><rect x="13" y="0" width="2" height="8" fill="#9090b2" /><path d="M0 5.500l4-3.500v2.500h6v2.500h-6v2.500z" fill="#9090b2" stroke="none" stroke-width="1" /><rect x="3" y="9" width="13" height="6.5" fill="#9090b2" /><text x="3.3" y="14.3" font-family="Liberation Sans,sans-serif" font-size="8" fill="#ececf4" font-weight="bold" textLength="12.4" lengthAdjust="spacingAndGlyphs">Dev</text></svg>
<svg style="left:1020px;top:71px" width="16" height="16" viewBox="0 0 16 16"><rect x="5" y="0" width="10" height="8" fill="#c6c6da" /><rect x="5" y="0" width="10" height="2" fill="#9090b2" /><rect x="9" y="0" width="2" height="8" fill="#9090b2" /><rect x="13" y="0" width="2" height="8" fill="#9090b2" /><path d="M0 4.500h7v-2l4 3.500l-4 3.500v-2h-7z" fill="#9090b2" stroke="none" stroke-width="1" /><rect x="3" y="9" width="13" height="6.5" fill="#9090b2" /><text x="3.3" y="14.3" font-family="Liberation Sans,sans-serif" font-size="8" fill="#ececf4" font-weight="bold" textLength="12.4" lengthAdjust="spacingAndGlyphs">Dev</text></svg>
<svg style="left:1042px;top:71px" width="16" height="16" viewBox="0 0 16 16"><path d="M4.500 0.500h8.500l2.500 2.500v6h-11z" fill="#c6c6da" stroke="#9090b2" stroke-width="1" /><rect x="7" y="0" width="5" height="3" fill="#9090b2" /><path d="M0 5.500l4-3.500v2.500h6v2.500h-6v2.500z" fill="#9090b2" stroke="none" stroke-width="1" /><rect x="3" y="9" width="13" height="6.5" fill="#9090b2" /><text x="3.3" y="14.3" font-family="Liberation Sans,sans-serif" font-size="8" fill="#ececf4" font-weight="bold" textLength="12.4" lengthAdjust="spacingAndGlyphs">Dev</text></svg>
<svg style="left:1064px;top:71px" width="16" height="16" viewBox="0 0 16 16"><path d="M4.500 0.500h8.500l2.500 2.500v6h-11z" fill="#c6c6da" stroke="#9090b2" stroke-width="1" /><rect x="7" y="0" width="5" height="3" fill="#9090b2" /><path d="M0 4.500h7v-2l4 3.500l-4 3.500v-2h-7z" fill="#9090b2" stroke="none" stroke-width="1" /><rect x="3" y="9" width="13" height="6.5" fill="#9090b2" /><text x="3.3" y="14.3" font-family="Liberation Sans,sans-serif" font-size="8" fill="#ececf4" font-weight="bold" textLength="12.4" lengthAdjust="spacingAndGlyphs">Dev</text></svg>
<div class="tb" style="left:4px;top:95px;width:906px;height:24px;"></div>
<div class="tbend" style="left:910px;top:95px;width:10px;height:24px;"><div style="left:2px;top:13px;width:5px;height:1px;background:#000"></div><div style="left:3px;top:14px;width:5px;height:1px;background:#fff"></div><div style="left:3px;top:18px;width:0;height:0;border-left:3px solid transparent;border-right:3px solid transparent;border-top:3px solid #fff"></div><div style="left:2px;top:17px;width:0;height:0;border-left:3px solid transparent;border-right:3px solid transparent;border-top:3px solid #000"></div></div>
<div class="grip" style="left:8px;top:100px;width:3px;height:14px;"></div>
<svg style="left:14px;top:95px" width="16" height="24" viewBox="0 0 16 24"><path d="M0 8.500h4.500M4.500 5v7M11.500 5v7M11.500 8.500h4.500" fill="none" stroke="#7c7ca6" stroke-width="1" /><text x="8" y="20" font-family="Liberation Sans,sans-serif" font-size="7.5" fill="#7070a0" text-anchor="middle" stroke="#7070a0" stroke-width="0.2" textLength="9.5" lengthAdjust="spacingAndGlyphs">F5</text></svg>
<svg style="left:36px;top:95px" width="16" height="24" viewBox="0 0 16 24"><path d="M0.500 5v3.500h4M4.500 5v7M11.500 5v7M11.500 8.500h4M15.500 5v3.500" fill="none" stroke="#7c7ca6" stroke-width="1" /><text x="8" y="20" font-family="Liberation Sans,sans-serif" font-size="7.5" fill="#7070a0" text-anchor="middle" stroke="#7070a0" stroke-width="0.2" textLength="14" lengthAdjust="spacingAndGlyphs">sF5</text></svg>
<svg style="left:58px;top:95px" width="16" height="24" viewBox="0 0 16 24"><path d="M0 8.500h4.500M4.500 5v7M11.500 5v7M11.500 8.500h4.500M4 12.500l8-7.500M3 11l1.500 1.500M11.500 5l1.500 1.500" fill="none" stroke="#7c7ca6" stroke-width="1" /><text x="8" y="20" font-family="Liberation Sans,sans-serif" font-size="7.5" fill="#7070a0" text-anchor="middle" stroke="#7070a0" stroke-width="0.2" textLength="9.5" lengthAdjust="spacingAndGlyphs">F6</text></svg>
<svg style="left:80px;top:95px" width="16" height="24" viewBox="0 0 16 24"><path d="M0.500 5v3.500h4M4.500 5v7M11.500 5v7M11.500 8.500h4M15.500 5v3.500M4 12.500l8-7.500M3 11l1.500 1.500M11.500 5l1.500 1.500" fill="none" stroke="#7c7ca6" stroke-width="1" /><text x="8" y="20" font-family="Liberation Sans,sans-serif" font-size="7.5" fill="#7070a0" text-anchor="middle" stroke="#7070a0" stroke-width="0.2" textLength="14" lengthAdjust="spacingAndGlyphs">sF6</text></svg>
<svg style="left:102px;top:95px" width="16" height="24" viewBox="0 0 16 24"><path d="M0 8.500h3M6 5q-3.500 3.500 0 7M10 5q3.500 3.500 0 7M13 8.500h3" fill="none" stroke="#7c7ca6" stroke-width="1" /><text x="8" y="20" font-family="Liberation Sans,sans-serif" font-size="7.5" fill="#7070a0" text-anchor="middle" stroke="#7070a0" stroke-width="0.2" textLength="9.5" lengthAdjust="spacingAndGlyphs">F7</text></svg>
<svg style="left:124px;top:95px" width="16" height="24" viewBox="0 0 16 24"><path d="M0 8.500h3M6 5.500h-3v6h3M10 5.500h3v6h-3M13 8.500h3" fill="none" stroke="#7c7ca6" stroke-width="1" /><text x="8" y="20" font-family="Liberation Sans,sans-serif" font-size="7.5" fill="#7070a0" text-anchor="middle" stroke="#7070a0" stroke-width="0.2" textLength="9.5" lengthAdjust="spacingAndGlyphs">F8</text></svg>
<div class="sep" style="left:145px;top:100px;width:2px;height:15px;"></div>
<svg style="left:152px;top:95px" width="16" height="24" viewBox="0 0 16 24"><path d="M0 7.500h16" fill="none" stroke="#7c7ca6" stroke-width="1" /><text x="8" y="20" font-family="Liberation Sans,sans-serif" font-size="7.5" fill="#7070a0" text-anchor="middle" stroke="#7070a0" stroke-width="0.2" textLength="9.5" lengthAdjust="spacingAndGlyphs">F9</text></svg>
<svg style="left:174px;top:95px" width="16" height="24" viewBox="0 0 16 24"><path d="M8.500 4.500v7" fill="none" stroke="#7c7ca6" stroke-width="1" /><text x="8" y="20" font-family="Liberation Sans,sans-serif" font-size="7.5" fill="#7070a0" text-anchor="middle" stroke="#7070a0" stroke-width="0.2" textLength="14" lengthAdjust="spacingAndGlyphs">sF9</text></svg>
<svg style="left:196px;top:95px" width="16" height="24" viewBox="0 0 16 24"><path d="M0 8.500h16M4.500 4.500l7 8M11.500 4.500l-7 8" fill="none" stroke="#7c7ca6" stroke-width="1" /><text x="8" y="20" font-family="Liberation Sans,sans-serif" font-size="7.5" fill="#7070a0" text-anchor="middle" stroke="#7070a0" stroke-width="0.2" textLength="14" lengthAdjust="spacingAndGlyphs">cF9</text></svg>
<svg style="left:218px;top:95px" width="16" height="24" viewBox="0 0 16 24"><path d="M8.500 4.500v8M5 4.500l7 8M12 4.500l-7 8" fill="none" stroke="#7c7ca6" stroke-width="1" /><text x="8" y="20" font-family="Liberation Sans,sans-serif" font-size="7.5" fill="#7070a0" text-anchor="middle" stroke="#7070a0" stroke-width="0.2" textLength="15.5" lengthAdjust="spacingAndGlyphs">cF10</text></svg>
<div class="sep" style="left:239px;top:100px;width:2px;height:15px;"></div>
<svg style="left:246px;top:95px" width="16" height="24" viewBox="0 0 16 24"><path d="M0 8.500h3M3.500 5v7M12.500 5v7M12.500 8.500h3.500M8 5v7M6 7l2-2l2 2" fill="none" stroke="#7c7ca6" stroke-width="1" /><text x="8" y="20" font-family="Liberation Sans,sans-serif" font-size="7.5" fill="#7070a0" text-anchor="middle" stroke="#7070a0" stroke-width="0.2" textLength="14" lengthAdjust="spacingAndGlyphs">sF7</text></svg>
<svg style="left:268px;top:95px" width="16" height="24" viewBox="0 0 16 24"><path d="M0 8.500h3M3.500 5v7M12.500 5v7M12.500 8.500h3.500M8 5v7M6 10l2 2l2-2" fill="none" stroke="#7c7ca6" stroke-width="1" /><text x="8" y="20" font-family="Liberation Sans,sans-serif" font-size="7.5" fill="#7070a0" text-anchor="middle" stroke="#7070a0" stroke-width="0.2" textLength="14" lengthAdjust="spacingAndGlyphs">sF8</text></svg>
<svg style="left:290px;top:95px" width="16" height="24" viewBox="0 0 16 24"><path d="M0.500 5v3.500h3M3.500 5v7M12.500 5v7M12.500 8.500h3M15.500 5v3.500M8 5v7M6 7l2-2l2 2" fill="none" stroke="#7c7ca6" stroke-width="1" /><text x="8" y="20" font-family="Liberation Sans,sans-serif" font-size="7.5" fill="#7070a0" text-anchor="middle" stroke="#7070a0" stroke-width="0.2" textLength="14" lengthAdjust="spacingAndGlyphs">aF7</text></svg>
<svg style="left:312px;top:95px" width="16" height="24" viewBox="0 0 16 24"><path d="M0.500 5v3.500h3M3.500 5v7M12.500 5v7M12.500 8.500h3M15.500 5v3.500M8 5v7M6 10l2 2l2-2" fill="none" stroke="#7c7ca6" stroke-width="1" /><text x="8" y="20" font-family="Liberation Sans,sans-serif" font-size="7.5" fill="#7070a0" text-anchor="middle" stroke="#7070a0" stroke-width="0.2" textLength="14" lengthAdjust="spacingAndGlyphs">aF8</text></svg>
<div class="sep" style="left:333px;top:100px;width:2px;height:15px;"></div>
<svg style="left:340px;top:95px" width="16" height="24" viewBox="0 0 16 24"><path d="M0 8.500h3M3.500 5v7M12.500 5v7M12.500 8.500h3.500M8 5v7M6 7l2-2l2 2M3 12l10-6" fill="none" stroke="#7c7ca6" stroke-width="1" /><text x="8" y="20" font-family="Liberation Sans,sans-serif" font-size="7.5" fill="#7070a0" text-anchor="middle" stroke="#7070a0" stroke-width="0.2" textLength="15.5" lengthAdjust="spacingAndGlyphs">saF5</text></svg>
<svg style="left:362px;top:95px" width="16" height="24" viewBox="0 0 16 24"><path d="M0 8.500h3M3.500 5v7M12.500 5v7M12.500 8.500h3.500M8 5v7M6 10l2 2l2-2M3 12l10-6" fill="none" stroke="#7c7ca6" stroke-width="1" /><text x="8" y="20" font-family="Liberation Sans,sans-serif" font-size="7.5" fill="#7070a0" text-anchor="middle" stroke="#7070a0" stroke-width="0.2" textLength="15.5" lengthAdjust="spacingAndGlyphs">saF6</text></svg>
<svg style="left:384px;top:95px" width="16" height="24" viewBox="0 0 16 24"><path d="M0.500 5v3.500h3M3.500 5v7M12.500 5v7M12.500 8.500h3M15.500 5v3.500M8 5v7M6 7l2-2l2 2M3 12l10-6" fill="none" stroke="#7c7ca6" stroke-width="1" /><text x="8" y="20" font-family="Liberation Sans,sans-serif" font-size="7.5" fill="#7070a0" text-anchor="middle" stroke="#7070a0" stroke-width="0.2" textLength="15.5" lengthAdjust="spacingAndGlyphs">saF7</text></svg>
<svg style="left:406px;top:95px" width="16" height="24" viewBox="0 0 16 24"><path d="M0.500 5v3.500h3M3.500 5v7M12.500 5v7M12.500 8.500h3M15.500 5v3.500M8 5v7M6 10l2 2l2-2M3 12l10-6" fill="none" stroke="#7c7ca6" stroke-width="1" /><text x="8" y="20" font-family="Liberation Sans,sans-serif" font-size="7.5" fill="#7070a0" text-anchor="middle" stroke="#7070a0" stroke-width="0.2" textLength="15.5" lengthAdjust="spacingAndGlyphs">saF8</text></svg>
<div class="sep" style="left:427px;top:100px;width:2px;height:15px;"></div>
<svg style="left:434px;top:95px" width="16" height="24" viewBox="0 0 16 24"><path d="M8.500 5v7.500M6 7.500l2.500-2.500l2.500 2.500" fill="none" stroke="#7c7ca6" stroke-width="1" /><text x="8" y="20" font-family="Liberation Sans,sans-serif" font-size="7.5" fill="#7070a0" text-anchor="middle" stroke="#7070a0" stroke-width="0.2" textLength="14" lengthAdjust="spacingAndGlyphs">aF5</text></svg>
<svg style="left:456px;top:95px" width="16" height="24" viewBox="0 0 16 24"><path d="M8.500 4.500v7.500M6 9.500l2.500 2.500l2.500-2.500" fill="none" stroke="#7c7ca6" stroke-width="1" /><text x="8" y="20" font-family="Liberation Sans,sans-serif" font-size="7.5" fill="#7070a0" text-anchor="middle" stroke="#7070a0" stroke-width="0.2" textLength="15.5" lengthAdjust="spacingAndGlyphs">caF5</text></svg>
<svg style="left:478px;top:95px" width="16" height="24" viewBox="0 0 16 24"><path d="M0 8.500h16M5 12l7-7.500" fill="none" stroke="#7c7ca6" stroke-width="1" /><text x="8" y="20" font-family="Liberation Sans,sans-serif" font-size="7.5" fill="#7070a0" text-anchor="middle" stroke="#7070a0" stroke-width="0.2" textLength="16" lengthAdjust="spacingAndGlyphs">caF10</text></svg>
<svg style="left:500px;top:95px" width="16" height="24" viewBox="0 0 16 24"><path d="M2.500 6v5h12" fill="none" stroke="#7c7ca6" stroke-width="1" /><text x="8" y="20" font-family="Liberation Sans,sans-serif" font-size="7.5" fill="#7070a0" text-anchor="middle" stroke="#7070a0" stroke-width="0.2" textLength="14" lengthAdjust="spacingAndGlyphs">F10</text></svg>
<svg style="left:522px;top:95px" width="16" height="24" viewBox="0 0 16 24"><path d="M0 6.500h5M2.500 6.500v6M6 5l8 8M14 5l-8 8M13 6.500h3M13 12.500h3" fill="none" stroke="#7c7ca6" stroke-width="1" /><text x="8" y="20" font-family="Liberation Sans,sans-serif" font-size="7.5" fill="#7070a0" text-anchor="middle" stroke="#7070a0" stroke-width="0.2" textLength="14" lengthAdjust="spacingAndGlyphs">aF9</text></svg>
<div class="sep" style="left:543px;top:100px;width:2px;height:15px;"></div>
<svg style="left:550px;top:95px" width="16" height="24" viewBox="0 0 16 24"><rect x="3.5" y="7.5" width="10" height="11" fill="#e4e4ee" stroke="#7c7ca6" stroke-width="1.4"/><path d="M0.500 10v6M15.500 10v6M0.500 13h3M13 13h3" fill="none" stroke="#7c7ca6" stroke-width="1" /><text x="8.5" y="16.5" font-family="Liberation Sans,sans-serif" font-size="9" fill="#7c7ca6" font-weight="bold" text-anchor="middle" textLength="8.500" lengthAdjust="spacingAndGlyphs">ST</text></svg>
<div class="sep" style="left:571px;top:100px;width:2px;height:15px;"></div>
<svg style="left:578px;top:95px" width="16" height="24" viewBox="0 0 16 24"><path d="M1 8.500h4M5.500 5v7M10.500 5v7M11 8.500h4" fill="none" stroke="#7c7ca6" stroke-width="1" /><path d="M3 13h6q2 0 2 2.5q0 2.5-2 2.5h-4l-2 2v-2q-2 0-2-2.5q0-2.5 2-2.5z" fill="#ececf4" stroke="#9a9abc" stroke-width="0.9" /><path d="M3 14.5h6M3 16.5h6" fill="none" stroke="#9a9abc" stroke-width="0.7" /><path d="M8 15l4-4l3 3l-4 4z" fill="#c4c4d8" stroke="#9a9abc" stroke-width="0.8" /></svg>
<svg style="left:600px;top:95px" width="16" height="24" viewBox="0 0 16 24"><rect x="0.5" y="7" width="4" height="2" fill="none" stroke="#7c7ca6"/><path d="M7 5h5q2 0 2 2.5q0 2.5-2 2.5h-3l-2 2v-2q-2 0-2-2.5q0-2.5 2-2.5z" fill="#ececf4" stroke="#9a9abc" stroke-width="0.9" /><path d="M7 6.5h5M7 8.5h5" fill="none" stroke="#9a9abc" stroke-width="0.7" /><path d="M9 9l4-4l3 3l-4 4z" fill="#c4c4d8" stroke="#9a9abc" stroke-width="0.8" /><path d="M0.500 17.500h3M3.500 15v5M6.500 15v5M6.500 17.500h2M10 15q-2 2.500 0 5M13 15q2 2.500 0 5" fill="none" stroke="#7c7ca6" stroke-width="1" /></svg>
<svg style="left:622px;top:95px" width="16" height="24" viewBox="0 0 16 24"><path d="M3 5h6q2 0 2 2.5q0 2.5-2 2.5h-4l-2 2v-2q-2 0-2-2.5q0-2.5 2-2.5z" fill="#ececf4" stroke="#9a9abc" stroke-width="0.9" /><path d="M3 6.5h6M3 8.5h6" fill="none" stroke="#9a9abc" stroke-width="0.7" /><path d="M9 9.5l4-4l3 3l-4 4z" fill="#c4c4d8" stroke="#9a9abc" stroke-width="0.8" /><path d="M0.500 17.500h3M5.500 15q-2 2.500 0 5M11.500 15q2 2.500 0 5M13 17.500h3" fill="none" stroke="#7c7ca6" stroke-width="1" /></svg>
<div class="sep" style="left:643px;top:100px;width:2px;height:15px;"></div>
<svg style="left:650px;top:95px" width="16" height="24" viewBox="0 0 16 24"><rect x="0.5" y="7" width="4" height="2" fill="none" stroke="#7c7ca6"/><path d="M7 5h5q2 0 2 2.5q0 2.5-2 2.5h-3l-2 2v-2q-2 0-2-2.5q0-2.5 2-2.5z" fill="#ececf4" stroke="#9a9abc" stroke-width="0.9" /><path d="M7 6.5h5M7 8.5h5" fill="none" stroke="#9a9abc" stroke-width="0.7" /><path d="M9 9l4-4l3 3l-4 4z" fill="#c4c4d8" stroke="#9a9abc" stroke-width="0.8" /><path d="M0.500 17.500h3M3.500 15v5M6.500 15v5" fill="none" stroke="#7c7ca6" stroke-width="1" /><rect x="9" y="14.5" width="7" height="5.5" fill="#9a9abc" /><path d="M9 17h7M9 19h7M11.500 16v4M14 16v4" fill="none" stroke="#ececf4" stroke-width="0.8" /></svg>
<div class="sep" style="left:671px;top:100px;width:2px;height:15px;"></div>
<svg style="left:678px;top:95px" width="16" height="24" viewBox="0 0 16 24"><rect x="0.5" y="7" width="3" height="2" fill="none" stroke="#7c7ca6"/><path d="M7 5h7q2 0 2 3.0q0 3.0-2 3.0h-5l-2 2v-2q-2 0-2-3.0q0-3.0 2-3.0z" fill="#ececf4" stroke="#9a9abc" stroke-width="0.9" /><path d="M7 6.5h7M7 8.5h7" fill="none" stroke="#9a9abc" stroke-width="0.7" /><path d="M0.500 17.500h3M3.500 15v5M6.500 15v5" fill="none" stroke="#7c7ca6" stroke-width="1" /><rect x="9" y="14.5" width="7" height="5.5" fill="#9a9abc" /><path d="M9 17h7M9 19h7M11.500 16v4M14 16v4" fill="none" stroke="#ececf4" stroke-width="0.8" /></svg>
<div class="sep" style="left:699px;top:100px;width:2px;height:15px;"></div>
<svg style="left:706px;top:95px" width="16" height="24" viewBox="0 0 16 24"><rect x="0.5" y="4.5" width="11" height="14" fill="#ececf4" stroke="#9a9abc"/><path d="M2 7h8M2 9h8M2 11h5M2 13h5M2 15h5" fill="none" stroke="#9a9abc" stroke-width="0.9" /><rect x="7" y="10" width="8.5" height="7.5" fill="#dcdce8" stroke="#9a9abc"/><path d="M8.500 12.500h5M8.500 14.500h5" fill="none" stroke="#7c7ca6" stroke-width="0.9" /></svg>
<svg style="left:728px;top:95px" width="16" height="24" viewBox="0 0 16 24"><rect x="4" y="4.5" width="9" height="8" fill="#ececf4" stroke="#9a9abc" stroke-dasharray="1.5 1"/><path d="M6 7h5M6 9h5" fill="none" stroke="#9a9abc" stroke-width="0.9" /><circle cx="10.5" cy="13.5" r="3.3" fill="#e4e4ee" stroke="#9a9abc" stroke-width="1.3"/><path d="M13 16l2.500 2.500" fill="none" stroke="#9a9abc" stroke-width="1.3" /><path d="M5 10v8l-5-4z" fill="#9a9abc" stroke="none" stroke-width="1" /></svg>
<svg style="left:750px;top:95px" width="16" height="24" viewBox="0 0 16 24"><rect x="4" y="4.5" width="9" height="8" fill="#ececf4" stroke="#9a9abc" stroke-dasharray="1.5 1"/><path d="M6 7h5M6 9h5" fill="none" stroke="#9a9abc" stroke-width="0.9" /><circle cx="10.5" cy="13.5" r="3.3" fill="#e4e4ee" stroke="#9a9abc" stroke-width="1.3"/><path d="M13 16l2.500 2.500" fill="none" stroke="#9a9abc" stroke-width="1.3" /><path d="M0 10v8l5-4z" fill="#9a9abc" stroke="none" stroke-width="1" /></svg>
<div class="sep" style="left:771px;top:100px;width:2px;height:15px;"></div>
<svg style="left:778px;top:95px" width="16" height="24" viewBox="0 0 16 24"><path d="M0 7.500h3M3.500 5.500v4M5.500 5.500v4M6 7.500h3M0 12.500h3M3.500 10.500v4M5.500 10.500v4M6 12.500h2.500M8.500 7.500v10.500M8.500 7.500h7M8.500 12.500h7M8.500 17.500h7" fill="none" stroke="#7c7ca6" stroke-width="0.9" stroke-dasharray="2 1"/></svg>
<svg style="left:800px;top:95px" width="16" height="24" viewBox="0 0 16 24"><path d="M0 7.500h3M3.500 5.500v4M5.500 5.500v4M6 7.500h3M0 12.500h3M3.500 10.500v4M5.500 10.500v4M6 12.500h2.500M8.500 7.500v10.500M8.500 7.500h7M8.500 12.500h7M8.500 17.500h7" fill="none" stroke="#7c7ca6" stroke-width="0.9" stroke-dasharray="2 1"/><path d="M6 8l2.500 2.500l6-6" fill="none" stroke="#7c7ca6" stroke-width="1.8" /></svg>
<svg style="left:822px;top:95px" width="16" height="24" viewBox="0 0 16 24"><rect x="3" y="5.5" width="7" height="8" fill="#ececf4" stroke="#9a9abc"/><path d="M4.500 8h4M4.500 10h4" fill="none" stroke="#9a9abc" stroke-width="0.8" /><circle cx="9" cy="10" r="4.3" fill="none" stroke="#9a9abc" stroke-width="1.2"/><path d="M12 13.500l3.500 4" fill="none" stroke="#9a9abc" stroke-width="1.2" /><rect x="0.5" y="14" width="7" height="5" fill="#7c7ca6" /><path d="M3 15.500v3M5 15.500v3" fill="none" stroke="#ececf4" stroke-width="0.8" /></svg>
<svg style="left:844px;top:95px" width="16" height="24" viewBox="0 0 16 24"><rect x="3" y="5.5" width="7" height="8" fill="#ececf4" stroke="#9a9abc"/><circle cx="9" cy="10" r="4.3" fill="none" stroke="#9a9abc" stroke-width="1.2"/><path d="M12 13.500l3.500 4" fill="none" stroke="#9a9abc" stroke-width="1.2" /><rect x="0.5" y="14" width="7" height="5" fill="#7c7ca6" /><path d="M3 15.500v3M5 15.500v3" fill="none" stroke="#ececf4" stroke-width="0.8" /><path d="M7 10.500l2 2l6-7" fill="none" stroke="#7c7ca6" stroke-width="2" /></svg>
<svg style="left:866px;top:95px" width="16" height="24" viewBox="0 0 16 24"><rect x="1" y="4.5" width="13" height="8" fill="#9a9abc" /><text x="1.5" y="11" font-family="Liberation Sans,sans-serif" font-size="7.5" fill="#ececf4" font-weight="bold" textLength="12" lengthAdjust="spacingAndGlyphs">Dev</text><circle cx="9.5" cy="13" r="3.5" fill="#e4e4ee" stroke="#9a9abc" stroke-width="1.3"/><path d="M12 15.500l3 3" fill="none" stroke="#9a9abc" stroke-width="1.3" /></svg>
<svg style="left:888px;top:95px" width="16" height="24" viewBox="0 0 16 24"><circle cx="7.5" cy="11" r="6" fill="#e4e4ee" stroke="#9a9abc" stroke-width="1.6"/><path d="M3.500 9h5M6 6.500v5M7 13h5" fill="none" stroke="#7c7ca6" stroke-width="1.6" /><path d="M12 15.500l3.500 3.500" fill="none" stroke="#9a9abc" stroke-width="1.3" /></svg>
<div class="tb" style="left:772px;top:121px;width:252px;height:24px;"></div>
<div class="tbend" style="left:1024px;top:121px;width:10px;height:24px;"><div style="left:2px;top:13px;width:5px;height:1px;background:#000"></div><div style="left:3px;top:14px;width:5px;height:1px;background:#fff"></div><div style="left:3px;top:18px;width:0;height:0;border-left:3px solid transparent;border-right:3px solid transparent;border-top:3px solid #fff"></div><div style="left:2px;top:17px;width:0;height:0;border-left:3px solid transparent;border-right:3px solid transparent;border-top:3px solid #000"></div></div>
<div class="grip" style="left:776px;top:126px;width:3px;height:14px;"></div>
<svg style="left:783px;top:126px" width="16" height="16" viewBox="0 0 16 16"><path d="M0 0h12l-2.500 3.500l2.500 3.500h-12z" fill="#1468e8" stroke="none" stroke-width="1" /><path d="M5 13l7-7l3 3l-7 7z" fill="#78c830" stroke="#407010" stroke-width="0.8" /><path d="M5 13l3 3l-4 0.500z" fill="#e8c020" stroke="#806000" stroke-width="0.5" /></svg>
<svg style="left:805px;top:126px" width="16" height="16" viewBox="0 0 16 16"><rect x="0.5" y="0.5" width="12" height="14" fill="#fff" stroke="#303030"/><path d="M2 3.500h9M2 5.500h9M2 7.500h5M2 9.500h5M2 11.500h5" fill="none" stroke="#505050" stroke-width="1" /><rect x="7" y="6" width="8.5" height="8" fill="#e8ecf8" stroke="#505870"/><path d="M8.500 8.500h5M8.500 10.500h5M8.500 12.500h4" fill="none" stroke="#3050b0" stroke-width="1" /></svg>
<svg style="left:827px;top:126px" width="16" height="16" viewBox="0 0 16 16"><rect x="3" y="0.5" width="10" height="9" fill="#f0f4fc" stroke="#506080" stroke-dasharray="1.5 1"/><path d="M5 3.500h6M5 5.500h6" fill="none" stroke="#3060c0" stroke-width="1" /><path d="M12.309999999999999 12.309999999999999l3 3" fill="none" stroke="#a04810" stroke-width="2" /><circle cx="10" cy="10" r="3.3" fill="#fff" stroke="#000" stroke-width="1.4"/><path d="M5 7v8l-5-4z" fill="#108010" stroke="none" stroke-width="1" /></svg>
<svg style="left:849px;top:126px" width="16" height="16" viewBox="0 0 16 16"><rect x="3" y="0.5" width="10" height="9" fill="#f0f4fc" stroke="#506080" stroke-dasharray="1.5 1"/><path d="M5 3.500h6M5 5.500h6" fill="none" stroke="#3060c0" stroke-width="1" /><path d="M12.309999999999999 12.309999999999999l3 3" fill="none" stroke="#a04810" stroke-width="2" /><circle cx="10" cy="10" r="3.3" fill="#fff" stroke="#000" stroke-width="1.4"/><path d="M0 7v8l5-4z" fill="#108010" stroke="none" stroke-width="1" /></svg>
<svg style="left:871px;top:126px" width="16" height="16" viewBox="0 0 16 16"><path d="M5 3h6v12.5h-6z" fill="#d8b070" stroke="#a07020" stroke-width="0.8" /><path d="M8.0 0v3" fill="none" stroke="#f09020" stroke-width="1.6" /><rect x="6" y="4" width="1.5" height="10.5" fill="#ecd0a0" /></svg>
<svg style="left:893px;top:126px" width="16" height="16" viewBox="0 0 16 16"><path d="M1 3h6v12.5h-6z" fill="#d8b070" stroke="#a07020" stroke-width="0.8" /><path d="M4.0 0v3" fill="none" stroke="#f09020" stroke-width="1.6" /><rect x="2" y="4" width="1.5" height="10.5" fill="#ecd0a0" /><text x="8" y="6.5" font-family="Liberation Sans,sans-serif" font-size="7.5" fill="#000" font-weight="bold">IL</text><rect x="7" y="8" width="9" height="7.5" fill="#1860e0" /><path d="M8 11.500h2M11 11.500h2M14 11.500h1.500M8 13.500h2M11 13.500h2M14 13.500h1.500" fill="none" stroke="#fff" stroke-width="1.2" /></svg>
<svg style="left:915px;top:126px" width="16" height="16" viewBox="0 0 16 16"><path d="M5 3h6v12.5h-6z" fill="#d8b070" stroke="#a07020" stroke-width="0.8" /><path d="M8.0 0v3" fill="none" stroke="#f09020" stroke-width="1.6" /><rect x="6" y="4" width="1.5" height="10.5" fill="#ecd0a0" /><path d="M2.500 1v10" fill="none" stroke="#f02000" stroke-width="2" /><path d="M0 9h5l-2.500 4.500z" fill="#f02000" stroke="none" stroke-width="1" /><rect x="8" y="10.5" width="3" height="6" fill="#111" /><rect x="13" y="10.5" width="3" height="6" fill="#111" /><rect x="9" y="8.5" width="2" height="3" fill="#111" /><rect x="13" y="8.5" width="2" height="3" fill="#111" /><rect x="11" y="11.5" width="2" height="2" fill="#111" /></svg>
<svg style="left:937px;top:126px" width="16" height="16" viewBox="0 0 16 16"><path d="M5 3h6v12.5h-6z" fill="#d8b070" stroke="#a07020" stroke-width="0.8" /><path d="M8.0 0v3" fill="none" stroke="#f09020" stroke-width="1.6" /><rect x="6" y="4" width="1.5" height="10.5" fill="#ecd0a0" /><path d="M2.500 4v10" fill="none" stroke="#f02000" stroke-width="2" /><path d="M0 5.500h5l-2.500-4.500z" fill="#f02000" stroke="none" stroke-width="1" /><rect x="8" y="10.5" width="3" height="6" fill="#111" /><rect x="13" y="10.5" width="3" height="6" fill="#111" /><rect x="9" y="8.5" width="2" height="3" fill="#111" /><rect x="13" y="8.5" width="2" height="3" fill="#111" /><rect x="11" y="11.5" width="2" height="2" fill="#111" /></svg>
<svg style="left:959px;top:126px" width="16" height="16" viewBox="0 0 16 16"><path d="M1 3h6v12.5h-6z" fill="#d8b070" stroke="#a07020" stroke-width="0.8" /><path d="M4.0 0v3" fill="none" stroke="#f09020" stroke-width="1.6" /><rect x="2" y="4" width="1.5" height="10.5" fill="#ecd0a0" /><path d="M7 8l8 8M15 8l-8 8" fill="none" stroke="#e80000" stroke-width="1.8" /></svg>
<svg style="left:981px;top:126px" width="16" height="16" viewBox="0 0 16 16"><circle cx="7" cy="7" r="6" fill="#e8e8f2" stroke="#9c9cbc" stroke-width="1.8"/><path d="M4 7h6M7 4v6" fill="none" stroke="#9c9cbc" stroke-width="1.8" /><path d="M11.500 11.500l3.500 3.500" fill="none" stroke="#b0b0c8" stroke-width="1.8" /></svg>
<svg style="left:1003px;top:126px" width="16" height="16" viewBox="0 0 16 16"><path d="M11.500 11.500l3.500 3.500" fill="none" stroke="#a05020" stroke-width="2" /><circle cx="7" cy="7" r="5.8" fill="#fff" stroke="#182048" stroke-width="1.8"/><path d="M3.500 7h7" fill="none" stroke="#000" stroke-width="2" /></svg>
<div style="left:0px;top:152px;width:2px;height:573px;background:#a9a9c6"></div>
<div style="left:0px;top:176px;width:418px;height:549px;background:#a9a9c6"></div>
<div style="left:0px;top:146px;width:418px;height:30px;background:linear-gradient(to bottom,#f8f8fc 0%,#e8e8f2 30%,#dcdce8 50%,#bcbcd2 75%,#a2a2be 96%,#7c7c9c 100%);border-radius:5px 3px 0 0;"></div>
<div class="grip" style="left:4px;top:151px;width:3px;height:20px;"></div>
<div class="t" style="left:14px;top:151px;">导航</div>
<svg style="left:386px;top:155px" width="9" height="11" viewBox="0 0 9 11"><rect x="2" y="1" width="5" height="5" fill="#000"/><rect x="3" y="2" width="1" height="3.500" fill="#fff"/><rect x="1" y="6" width="7" height="1" fill="#000"/><rect x="4" y="7" width="1" height="3" fill="#000"/></svg>
<svg style="left:402px;top:157px" width="8" height="7" viewBox="0 0 8 7"><path d="M0.800 0.800l6.400 5.400M7.200 0.800l-6.400 5.400" stroke="#000" stroke-width="1.700" fill="none"/></svg>
<div style="left:2px;top:177px;width:415px;height:25px;background:linear-gradient(to bottom,#f8f8fc 0%,#e8e8f2 50%,#d2d2e4 100%)"></div>
<div class="t" style="left:5px;top:180px;font-size:10px;font-weight:bold;color:#ff0000;line-height:18px">工程</div>
<div style="left:4px;top:202px;width:413px;height:24px;background:linear-gradient(to bottom,#f6f6fa 0%,#e4e4ee 45%,#c0c0d6 75%,#a6a6c2 95%,#7c7c9c 100%);border-radius:3px"></div>
<svg style="left:6px;top:206px" width="16" height="16" viewBox="0 0 16 16"><path d="M0.500 4.500h8l2.500 2.500v8.500h-10.500z" fill="#fff" stroke="#303030" stroke-width="1" /><path d="M11.500 0v7M8 3.500h7" fill="none" stroke="#f08818" stroke-width="2.6" /><path d="M11.500 0.800v5.400M8.800 3.500h5.400" fill="none" stroke="#ffc060" stroke-width="0.8" /></svg>
<svg style="left:28px;top:206px" width="16" height="16" viewBox="0 0 16 16"><path d="M0.500 2.500h5l2.500 2.500v6h-7.500z" fill="#e8e8f2" stroke="#b0b0c8" stroke-width="0.9" /><path d="M6.500 6.500h5l3 3v6h-8z" fill="#ececf4" stroke="#b0b0c8" stroke-width="0.9" /><path d="M8 10.500h5M8 12.500h5" fill="none" stroke="#c4c4d8" stroke-width="0.8" /></svg>
<svg style="left:50px;top:206px" width="16" height="16" viewBox="0 0 16 16"><path d="M0.500 3.500h11v10h-11z" fill="#dcdce8" stroke="#b0b0c8" stroke-width="0.9" /><rect x="3.5" y="2" width="5" height="2.5" fill="#ececf4" stroke="#b0b0c8" stroke-width="0.8"/><path d="M6.500 7.500h5.500l3 3v5h-8.500z" fill="#ececf4" stroke="#b0b0c8" stroke-width="0.9" /><path d="M8 11.500h5M8 13.500h5" fill="none" stroke="#c4c4d8" stroke-width="0.8" /></svg>
<svg style="left:72px;top:206px" width="16" height="16" viewBox="0 0 16 16"><path d="M0.500 0.500h5l2.500 2.500v7h-7.500z" fill="#fff" stroke="#303030" stroke-width="0.9" /><path d="M2 4h4M2 6h4M2 8h3" fill="none" stroke="#606060" stroke-width="0.8" /><circle cx="10.5" cy="10.5" r="4.8" fill="#1c68d8" stroke="#0c48a8" stroke-width="0.8"/><rect x="9.8" y="9.8" width="1.6" height="3.8" fill="#fff" /><circle cx="10.6" cy="8" r="1" fill="#fff" stroke="none" stroke-width="1"/></svg>
<svg style="left:94px;top:206px" width="16" height="16" viewBox="0 0 16 16"><path d="M1.500 1.500h8l3 3v11h-11z" fill="#d8e8fc" stroke="#4868c0" stroke-width="0.9" /><path d="M4 7.500q3.500-4 6.500 0l1.500-1v4h-4l1.200-1.300q-2-2.500-4 0.300zM10.500 10.500q-3.500 4-6.500 0l-1.500 1v-4h4l-1.200 1.300q2 2.500 4-0.300z" fill="#10a020" stroke="none" stroke-width="1" /></svg>
<svg style="left:122px;top:206px" width="16" height="16" viewBox="0 0 16 16"><path d="M0 6.500l3.500-5.500h6.500v6z" fill="#707070" stroke="#404040" stroke-width="0.6" /><rect x="7" y="4" width="3" height="11" fill="#f05060" /><rect x="10" y="3" width="4.5" height="12" fill="#787878" /><rect x="10" y="3" width="4.5" height="1.5" fill="#202020" /><rect x="11" y="6" width="2.5" height="8" fill="#d8d8d8" /><rect x="11.5" y="5" width="1" height="1" fill="#40e040" /></svg>
<div class="sep" style="left:115px;top:207px;width:2px;height:15px;"></div>
<div style="left:139px;top:212px;width:0px;height:0px;border-left:3px solid transparent;border-right:3px solid transparent;border-top:3px solid #000;width:0;height:0"></div>
<div style="left:2px;top:227px;width:395px;height:361px;background:#fff;overflow:hidden"></div>
<div style="left:2px;top:227px;width:395px;height:361px;overflow:hidden"><div style="left:7px;top:11px;width:1px;height:350px;background-image:repeating-linear-gradient(to bottom,#808080 0 1px,transparent 1px 2px)"></div><div style="left:29px;top:88px;width:1px;height:12px;background-image:repeating-linear-gradient(to bottom,#808080 0 1px,transparent 1px 2px)"></div><div style="left:29px;top:154px;width:1px;height:207px;background-image:repeating-linear-gradient(to bottom,#808080 0 1px,transparent 1px 2px)"></div><div style="left:51px;top:176px;width:1px;height:12px;background-image:repeating-linear-gradient(to bottom,#808080 0 1px,transparent 1px 2px)"></div><div style="left:73px;top:198px;width:1px;height:34px;background-image:repeating-linear-gradient(to bottom,#808080 0 1px,transparent 1px 2px)"></div><div style="left:51px;top:264px;width:1px;height:12px;background-image:repeating-linear-gradient(to bottom,#808080 0 1px,transparent 1px 2px)"></div><div style="left:73px;top:286px;width:1px;height:34px;background-image:repeating-linear-gradient(to bottom,#808080 0 1px,transparent 1px 2px)"></div><div style="left:7px;top:10px;width:13px;height:1px;background-image:repeating-linear-gradient(to right,#808080 0 1px,transparent 1px 2px)"></div><div style="left:3px;top:6px;width:9px;height:9px;border:1px solid #848484;background:#fff"><div style="left:1px;top:3px;width:5px;height:1px;background:#000"></div><div style="left:3px;top:1px;width:1px;height:5px;background:#000"></div></div><svg style="left:21px;top:3px" width="16" height="16" viewBox="0 0 16 16"><path d="M0.500 4.500q0-1.500 1.500-1.500h2l1 1h1v10.500h-5.500z" fill="#f8c848" stroke="#b87800" stroke-width="0.8" /><path d="M0.500 14.500h14.500v-6h-14.500z" fill="#f4b830" stroke="#a86c00" stroke-width="0.8" /><rect x="3" y="1" width="8" height="9" fill="#484848" /><rect x="3" y="4" width="8" height="1" fill="#b0b0b0" /><rect x="3" y="6.5" width="8" height="1" fill="#b0b0b0" /><rect x="5.5" y="2" width="1.3" height="1.3" fill="#40e040" /><path d="M6 14.500l6.500-8" fill="none" stroke="#1c50d0" stroke-width="2.2" /><circle cx="13" cy="5.5" r="2" fill="none" stroke="#1c50d0" stroke-width="1.5"/><circle cx="5.5" cy="14.8" r="1.3" fill="#1c50d0" stroke="none" stroke-width="1"/></svg><div class="t" style="left:42px;top:1px;color:#000">参数</div><div style="left:7px;top:34px;width:13px;height:1px;background-image:repeating-linear-gradient(to right,#808080 0 1px,transparent 1px 2px)"></div><svg style="left:21px;top:25px" width="16" height="16" viewBox="0 0 16 16"><path d="M0.500 4.500q0-1.500 1.500-1.500h2l1 1h1v10.500h-5.500z" fill="#f8c848" stroke="#b87800" stroke-width="0.8" /><path d="M0.500 14.500h14.500v-6h-14.500z" fill="#f4b830" stroke="#a86c00" stroke-width="0.8" /><rect x="4" y="0.5" width="5" height="11" fill="#8c8c8c" /><rect x="4" y="0.5" width="5" height="2" fill="#101010" /><rect x="8.5" y="2.5" width="5" height="12" fill="#787878" /><rect x="8.5" y="2.5" width="5" height="2" fill="#101010" /><rect x="12" y="5" width="1.5" height="1.5" fill="#e00000" /><rect x="5.5" y="7" width="2" height="2" fill="#d8d8d8" /><rect x="10" y="9" width="2" height="2" fill="#d8d8d8" /></svg><div class="t" style="left:42px;top:23px;color:#000">智能功能模块</div><div style="left:7px;top:56px;width:13px;height:1px;background-image:repeating-linear-gradient(to right,#808080 0 1px,transparent 1px 2px)"></div><svg style="left:21px;top:47px" width="16" height="16" viewBox="0 0 16 16"><circle cx="6" cy="6" r="5.8" fill="#2878e0" stroke="#1450a8" stroke-width="0.6"/><path d="M3.1 1.3600000000000003q5.22 -1.74 6.38 2.9q-1.74 4.64 -5.8 2.9q-3.48 -2.32 -0.58 -5.8z" fill="#38b838" stroke="none" stroke-width="1" /><circle cx="4.26" cy="3.68" r="1.74" fill="#a8f0a8" stroke="none" stroke-width="1"/><rect x="4.5" y="5" width="8" height="10.5" fill="#f0f4fa" stroke="#6078a0" stroke-width="0.8"/><path d="M6 7.500h3M6 9.500h3M6 11.500h3M6 13.500h5" fill="none" stroke="#707070" stroke-width="0.8" /><path d="M9 12.500l6-6.500l1.500 1.500l-6 6.500z" fill="#48b048" stroke="#206820" stroke-width="0.6" /><path d="M9 12.500l-0.800 2l2.300-0.500z" fill="#e0a070" stroke="none" stroke-width="1" /></svg><div class="t" style="left:42px;top:45px;color:#000">全局软元件注释</div><div style="left:7px;top:78px;width:13px;height:1px;background-image:repeating-linear-gradient(to right,#808080 0 1px,transparent 1px 2px)"></div><div style="left:3px;top:74px;width:9px;height:9px;border:1px solid #848484;background:#fff"><div style="left:1px;top:3px;width:5px;height:1px;background:#000"></div></div><svg style="left:21px;top:69px" width="16" height="16" viewBox="0 0 16 16"><path d="M0.500 4.500q0-1.500 1.500-1.500h2l1 1h1v10.500h-5.500z" fill="#f8c848" stroke="#b87800" stroke-width="0.8" /><path d="M0.500 14.500h14.500v-6h-14.500z" fill="#f4b830" stroke="#a86c00" stroke-width="0.8" /><circle cx="8" cy="5" r="4.8" fill="#2878e0" stroke="#1450a8" stroke-width="0.6"/><path d="M5.6 1.1600000000000001q4.32 -1.44 5.28 2.4q-1.44 3.84 -4.8 2.4q-2.88 -1.92 -0.48 -4.8z" fill="#38b838" stroke="none" stroke-width="1" /><circle cx="6.5600000000000005" cy="3.08" r="1.44" fill="#a8f0a8" stroke="none" stroke-width="1"/><rect x="5.5" y="6" width="10" height="8.5" fill="#fff" stroke="#2828e8" stroke-width="1"/><path d="M5.5 8.833333333333334h10M5.5 11.666666666666668h10M9.5 6v8.5" fill="none" stroke="#2828e8" stroke-width="1" /><rect x="10.5" y="9.833333333333334" width="4.0" height="1" fill="#b0b0b0" /></svg><div class="t" style="left:42px;top:67px;color:#000">全局标签</div><div style="left:29px;top:100px;width:13px;height:1px;background-image:repeating-linear-gradient(to right,#808080 0 1px,transparent 1px 2px)"></div><svg style="left:43px;top:91px" width="16" height="16" viewBox="0 0 16 16"><circle cx="6.5" cy="6" r="5.8" fill="#2878e0" stroke="#1450a8" stroke-width="0.6"/><path d="M3.6 1.3600000000000003q5.22 -1.74 6.38 2.9q-1.74 4.64 -5.8 2.9q-3.48 -2.32 -0.58 -5.8z" fill="#38b838" stroke="none" stroke-width="1" /><circle cx="4.76" cy="3.68" r="1.74" fill="#a8f0a8" stroke="none" stroke-width="1"/><rect x="5" y="7" width="11" height="8.5" fill="#fff" stroke="#2828e8" stroke-width="1"/><path d="M5 9.833333333333334h11M5 12.666666666666668h11M9.4 7v8.5" fill="none" stroke="#2828e8" stroke-width="1" /><rect x="10.4" y="10.833333333333334" width="4.6" height="1" fill="#b0b0b0" /></svg><div class="t" style="left:64px;top:89px;color:#000"><span style="letter-spacing:0.55px">Global1</span></div><div style="left:7px;top:122px;width:13px;height:1px;background-image:repeating-linear-gradient(to right,#808080 0 1px,transparent 1px 2px)"></div><div style="left:3px;top:118px;width:9px;height:9px;border:1px solid #848484;background:#fff"><div style="left:1px;top:3px;width:5px;height:1px;background:#000"></div><div style="left:3px;top:1px;width:1px;height:5px;background:#000"></div></div><svg style="left:21px;top:113px" width="16" height="16" viewBox="0 0 16 16"><path d="M0.500 4.500q0-1.500 1.500-1.500h2l1 1h1v10.500h-5.500z" fill="#f8c848" stroke="#b87800" stroke-width="0.8" /><path d="M0.500 14.500h14.500v-6h-14.500z" fill="#f4b830" stroke="#a86c00" stroke-width="0.8" /><path d="M5.500 0.500h9.500l-0.500 7h-8z" fill="#7ce4f0" stroke="#507890" stroke-width="0.8" /><rect x="7" y="8.5" width="9" height="3.5" fill="#282828" /><path d="M1 3l2-2l7 8l-2 2z" fill="#48a848" stroke="#205820" stroke-width="0.7" /><path d="M8 11l2-2l1 3z" fill="#e8b080" stroke="none" stroke-width="1" /></svg><div class="t" style="left:42px;top:111px;color:#000">程序设置</div><div style="left:7px;top:144px;width:13px;height:1px;background-image:repeating-linear-gradient(to right,#808080 0 1px,transparent 1px 2px)"></div><div style="left:3px;top:140px;width:9px;height:9px;border:1px solid #848484;background:#fff"><div style="left:1px;top:3px;width:5px;height:1px;background:#000"></div></div><svg style="left:21px;top:135px" width="16" height="16" viewBox="0 0 16 16"><path d="M1 5h14.500v10h-14.500z" fill="#f8dc70" stroke="#e0a020" stroke-width="0.9" /><circle cx="4.5" cy="3.5" r="2.5" fill="#f080a0" stroke="none" stroke-width="1"/><circle cx="5" cy="3" r="1" fill="#fcd0dc" stroke="none" stroke-width="1"/><path d="M8 1l2 1.500l2.500-2l2 2v4h-7z" fill="#70c050" stroke="none" stroke-width="1" /><path d="M10 1.500l1 2l2-1.500" fill="none" stroke="#e8f8d8" stroke-width="1" /><path d="M3 9q2-2 4 0q-1 3-4 0zM9 9l4 0.500l-1 3.500l-3.500-1z" fill="#d8d080" stroke="none" stroke-width="1" /></svg><div class="t" style="left:42px;top:133px;color:#000">程序部件</div><div style="left:29px;top:166px;width:13px;height:1px;background-image:repeating-linear-gradient(to right,#808080 0 1px,transparent 1px 2px)"></div><div style="left:25px;top:162px;width:9px;height:9px;border:1px solid #848484;background:#fff"><div style="left:1px;top:3px;width:5px;height:1px;background:#000"></div></div><svg style="left:43px;top:157px" width="16" height="16" viewBox="0 0 16 16"><path d="M3.500 0.500h6l4 4v9h-10z" fill="#e4e8f0" stroke="#8090a8" stroke-width="0.8" /><path d="M5.500 1v12M7.500 1v12" fill="none" stroke="#a8b0c0" stroke-width="0.8" /><rect x="8" y="5.5" width="4" height="2.5" fill="#fff" stroke="#a0a8b8" stroke-width="0.6"/><path d="M0.500 6.500h1.500v8.500h13v-6.500h-11.500v6.500h-3z" fill="#f4c040" stroke="#b07800" stroke-width="0.8" /><rect x="3.8" y="8.8" width="10.7" height="5.4" fill="#fae8a8" /></svg><div class="t" style="left:64px;top:155px;color:#000">程序</div><div style="left:51px;top:188px;width:13px;height:1px;background-image:repeating-linear-gradient(to right,#808080 0 1px,transparent 1px 2px)"></div><div style="left:47px;top:184px;width:9px;height:9px;border:1px solid #848484;background:#fff"><div style="left:1px;top:3px;width:5px;height:1px;background:#000"></div></div><svg style="left:65px;top:179px" width="16" height="16" viewBox="0 0 16 16"><path d="M0.500 6q0-1.500 1.500-1.500h1.500v10.500h-3z" fill="#f8c848" stroke="#b87800" stroke-width="0.8" /><path d="M0.500 15h15v-5h-15z" fill="#f4b830" stroke="#a86c00" stroke-width="0.8" /><defs><linearGradient id="stg" x1="0" y1="0" x2="1" y2="1"><stop offset="0" stop-color="#f4f6fa"/><stop offset="1" stop-color="#a8b0bc"/></linearGradient></defs><path d="M3 0h8.5l3 3v10h-11.5z" fill="url(#stg)" stroke="#5878a0" stroke-width="0.9" /><path d="M11.5 0v3h3" fill="#fff" stroke="#5878a0" stroke-width="0.7" /><text x="8.75" y="9.5" font-family="Liberation Sans,sans-serif" font-size="8" fill="#101010" font-weight="bold" text-anchor="middle" textLength="9.0" lengthAdjust="spacingAndGlyphs">ST</text></svg><div class="t" style="left:86px;top:177px;color:#ff0000">POU_01</div><div style="left:73px;top:210px;width:13px;height:1px;background-image:repeating-linear-gradient(to right,#808080 0 1px,transparent 1px 2px)"></div><svg style="left:87px;top:201px" width="16" height="16" viewBox="0 0 16 16"><defs><linearGradient id="stg" x1="0" y1="0" x2="1" y2="1"><stop offset="0" stop-color="#f4f6fa"/><stop offset="1" stop-color="#a8b0bc"/></linearGradient></defs><path d="M2 0.5h9l3 3v12h-12z" fill="url(#stg)" stroke="#5878a0" stroke-width="0.9" /><path d="M11 0.5v3h3" fill="#fff" stroke="#5878a0" stroke-width="0.7" /><text x="8.0" y="12.0" font-family="Liberation Sans,sans-serif" font-size="8.5" fill="#101010" font-weight="bold" text-anchor="middle" textLength="9.5" lengthAdjust="spacingAndGlyphs">ST</text></svg><div style="left:106px;top:198px;width:64px;height:22px;background:#f0f0f0"></div><div class="t" style="left:108px;top:199px;color:#ff0000">程序本体</div><div style="left:73px;top:232px;width:13px;height:1px;background-image:repeating-linear-gradient(to right,#808080 0 1px,transparent 1px 2px)"></div><svg style="left:87px;top:223px" width="16" height="16" viewBox="0 0 16 16"><path d="M1 1.500l8.500-1.500l2 9.500l-8 3z" fill="#88c8f0" stroke="#a0b8d0" stroke-width="0.6" /><path d="M1 1.500l2.500 11l-1.500-0.500z" fill="#e0e8f0" stroke="none" stroke-width="1" /><rect x="4.5" y="6.5" width="11" height="8.5" fill="#fff" stroke="#2828e8" stroke-width="1"/><path d="M4.5 9.333333333333334h11M4.5 12.166666666666668h11M8.9 6.5v8.5" fill="none" stroke="#2828e8" stroke-width="1" /><rect x="9.9" y="10.333333333333334" width="4.6" height="1" fill="#b0b0b0" /></svg><div class="t" style="left:108px;top:221px;color:#ff0000">局部标签</div><div style="left:29px;top:254px;width:13px;height:1px;background-image:repeating-linear-gradient(to right,#808080 0 1px,transparent 1px 2px)"></div><div style="left:25px;top:250px;width:9px;height:9px;border:1px solid #848484;background:#fff"><div style="left:1px;top:3px;width:5px;height:1px;background:#000"></div></div><svg style="left:43px;top:245px" width="16" height="16" viewBox="0 0 16 16"><path d="M0.500 4.500q0-1.500 1.500-1.500h2l1 1h1v10.500h-5.500z" fill="#f8c848" stroke="#b87800" stroke-width="0.8" /><path d="M0.500 14.500h14.500v-6h-14.500z" fill="#f4b830" stroke="#a86c00" stroke-width="0.8" /><path d="M5 1.500h8.500v2.500h-2.500v2h-3.500v-2h-2.500z" fill="#5060e0" stroke="#2030a0" stroke-width="0.6" /><path d="M7 6h8v2.500l1 0.500v3l-1 0.500v2.500h-8z" fill="#30a030" stroke="#186018" stroke-width="0.7" /><rect x="3" y="8" width="3" height="1.5" fill="#4050d0" /><rect x="3" y="11.5" width="4" height="1.5" fill="#30a030" /></svg><div class="t" style="left:64px;top:243px;color:#000">FB/FUN</div><div style="left:51px;top:276px;width:13px;height:1px;background-image:repeating-linear-gradient(to right,#808080 0 1px,transparent 1px 2px)"></div><div style="left:47px;top:272px;width:9px;height:9px;border:1px solid #848484;background:#fff"><div style="left:1px;top:3px;width:5px;height:1px;background:#000"></div></div><svg style="left:65px;top:267px" width="16" height="16" viewBox="0 0 16 16"><path d="M0.500 3.500q0-1.500 1.500-1.500h2.500l1 1h1.500v12h-6.500z" fill="#f8d058" stroke="#b88000" stroke-width="0.8" /><path d="M0.500 15h15v-9h-3v6h-12z" fill="#f4c038" stroke="#a87000" stroke-width="0.8" /><path d="M5 3.500h9v2l1.500 0.500v3l-1.500 0.500v2.500h-9z" fill="#38a838" stroke="#1c681c" stroke-width="0.7" /><rect x="3" y="6" width="3" height="1.5" fill="#fff" /><rect x="3" y="9.5" width="3" height="1.5" fill="#fff" /></svg><div class="t" style="left:86px;top:265px;color:#ff0000">11</div><div style="left:73px;top:298px;width:13px;height:1px;background-image:repeating-linear-gradient(to right,#808080 0 1px,transparent 1px 2px)"></div><svg style="left:87px;top:289px" width="16" height="16" viewBox="0 0 16 16"><path d="M2.500 0.500h7.500l3.500 3.500v11.500h-11z" fill="#fff" stroke="#5878a0" stroke-width="0.9" /><path d="M10 0.500v3.500h3.500" fill="#dde6f0" stroke="#5878a0" stroke-width="0.7" /><path d="M4.500 3v7M7.500 3v7" fill="none" stroke="#1838c0" stroke-width="1.6" /><path d="M3 6.500h2M7 6.500h2" fill="none" stroke="#1838c0" stroke-width="1" /><path d="M7.500 7v7M10.500 7v7" fill="none" stroke="#d01830" stroke-width="1.6" /><path d="M4 10.500h4M10 10.500h2.500" fill="none" stroke="#d01830" stroke-width="1" /></svg><div class="t" style="left:108px;top:287px;color:#ff0000">程序本体</div><div style="left:73px;top:320px;width:13px;height:1px;background-image:repeating-linear-gradient(to right,#808080 0 1px,transparent 1px 2px)"></div><svg style="left:87px;top:311px" width="16" height="16" viewBox="0 0 16 16"><path d="M1 1.500l8.500-1.500l2 9.500l-8 3z" fill="#88c8f0" stroke="#a0b8d0" stroke-width="0.6" /><path d="M1 1.500l2.500 11l-1.500-0.500z" fill="#e0e8f0" stroke="none" stroke-width="1" /><rect x="4.5" y="6.5" width="11" height="8.5" fill="#fff" stroke="#2828e8" stroke-width="1"/><path d="M4.5 9.333333333333334h11M4.5 12.166666666666668h11M8.9 6.5v8.5" fill="none" stroke="#2828e8" stroke-width="1" /><rect x="9.9" y="10.333333333333334" width="4.6" height="1" fill="#b0b0b0" /></svg><div class="t" style="left:108px;top:309px;color:#ff0000">局部标签</div><div style="left:29px;top:342px;width:13px;height:1px;background-image:repeating-linear-gradient(to right,#808080 0 1px,transparent 1px 2px)"></div><svg style="left:43px;top:333px" width="16" height="16" viewBox="0 0 16 16"><path d="M0.500 3q0-1.500 1.500-1.500h2v13.500h-3.500z" fill="#f8c848" stroke="#b87800" stroke-width="0.8" /><path d="M0.500 15h14.500v-3h-14.500z" fill="#f4b830" stroke="#a86c00" stroke-width="0.8" /><rect x="6" y="1" width="8.5" height="4" fill="#c02848" /><rect x="6" y="5.5" width="8.5" height="4" fill="#30b030" /><rect x="6" y="10" width="8.5" height="4" fill="#e0d020" /><path d="M4 3h2M4 7.500h2M4 12h2M4.500 3v9M14.500 3h1.500M14.500 7.500h1.500M14.500 12h1.500M15.500 3v9" fill="none" stroke="#101010" stroke-width="1.4" /></svg><div class="t" style="left:64px;top:331px;color:#000">结构体</div><div style="left:29px;top:364px;width:13px;height:1px;background-image:repeating-linear-gradient(to right,#808080 0 1px,transparent 1px 2px)"></div><svg style="left:43px;top:355px" width="16" height="16" viewBox="0 0 16 16"><path d="M3.500 0.500h6l4 4v9h-10z" fill="#e4e8f0" stroke="#8090a8" stroke-width="0.8" /><path d="M5.500 1v12M7.500 1v12" fill="none" stroke="#a8b0c0" stroke-width="0.8" /><path d="M0.500 6.500h1.500v8.500h13v-6.500h-11.500v6.500h-3z" fill="#f4c040" stroke="#b07800" stroke-width="0.8" /></svg><div class="t" style="left:64px;top:353px;color:#000">局部软元件注释</div></div>
<div style="left:397px;top:227px;width:20px;height:361px;background:#f0f0f0"></div>
<div style="left:417px;top:176px;width:1px;height:549px;background:#8686a8"></div>
<div style="left:398px;top:249px;width:18px;height:266px;background:linear-gradient(to right,#f4f4f4,#dcdcdc 45%,#cfcfcf);border:1px solid #979797;border-radius:2px"></div>
<div style="left:403px;top:378px;width:9px;height:8px;background-image:repeating-linear-gradient(to bottom,#606060 0 1px,transparent 1px 2px)"></div>
<div style="left:402px;top:235px;width:0px;height:0px;border-left:5px solid transparent;border-right:5px solid transparent;border-bottom:5px solid #505050;width:0;height:0"></div>
<div style="left:402px;top:575px;width:0px;height:0px;border-left:5px solid transparent;border-right:5px solid transparent;border-top:5px solid #505050;width:0;height:0"></div>
<div style="left:0px;top:595px;width:418px;height:130px;background:#8a8aac"></div>
<div style="left:1px;top:588px;width:416px;height:7px;background:linear-gradient(to bottom,#babad0,#9c9cbc)"></div>
<div style="left:191px;top:589px;width:34px;height:3px;background-image:repeating-linear-gradient(to right,#404070 0 2px,transparent 2px 4px)"></div>
<div style="left:1px;top:596px;width:416px;height:31px;background:linear-gradient(to bottom,#fde891 0%,#fbd272 35%,#f6b644 70%,#f0a020 100%)"></div>
<div style="left:1px;top:628px;width:416px;height:31px;background:linear-gradient(to bottom,#e6e6f0 0%,#d2d2e2 35%,#b6b6ce 70%,#9898b8 100%)"></div>
<div style="left:1px;top:660px;width:416px;height:31px;background:linear-gradient(to bottom,#e6e6f0 0%,#d2d2e2 35%,#b6b6ce 70%,#9898b8 100%)"></div>
<div style="left:1px;top:692px;width:416px;height:32px;background:linear-gradient(to bottom,#e6e6f0 0%,#d2d2e2 35%,#b6b6ce 70%,#9898b8 100%)"></div>
<svg style="left:6px;top:600px" width="24" height="24" viewBox="0 0 24 24"><path d="M1 16l6-13.500l11-2v12.500z" fill="#686868" stroke="#404040" stroke-width="0.6" /><path d="M7.500 3.500l9.500-1.800v10l-9.500 2z" fill="#a0a0a0" stroke="none" stroke-width="1" /><path d="M1 16l11-2.500v1.500l-11 2.500z" fill="#909090" stroke="none" stroke-width="1" /><rect x="10" y="9" width="5" height="14.5" fill="#e03018" /><rect x="11" y="8" width="2" height="2" fill="#a01808" /><rect x="15" y="10" width="4" height="13.5" fill="#404040" /><rect x="19" y="8" width="5" height="15.5" fill="#585858" /><rect x="20" y="11" width="3" height="2" fill="#e0e0e0" /><rect x="20" y="14" width="3" height="1.5" fill="#c0c0c0" /><rect x="20" y="17" width="3" height="1.5" fill="#c0c0c0" /><rect x="20" y="20" width="3" height="1.5" fill="#c0c0c0" /><rect x="16" y="12" width="1.5" height="4" fill="#40c060" /></svg>
<div class="t" style="left:35px;top:601px;font-weight:bold">工程</div>
<svg style="left:6px;top:632px" width="24" height="24" viewBox="0 0 24 24"><path d="M0.500 2.500q5-2 11 1q5-3 10-2.500v14q-5-0.500-10 2.500q-6-3-11-1z" fill="#f4ece0" stroke="#685840" stroke-width="0.9" /><path d="M11.500 3.500v14" fill="none" stroke="#908070" stroke-width="0.9" /><path d="M2.500 5h7M2.500 7.500h7M2.500 10h7M2.500 12.500h7M13.500 5h6M13.500 7.500h3" fill="none" stroke="#d0c4b4" stroke-width="0.8" /><path d="M16 8l2-1l3 5q3 1 3 4v5h-7v-4q-3-1-2-3.500l2 0.500z" fill="#f0c848" stroke="#b08820" stroke-width="0.8" /><rect x="16" y="21" width="8" height="2.5" fill="#58b058" /></svg>
<div class="t" style="left:35px;top:633px;font-weight:bold">用户库</div>
<svg style="left:6px;top:664px" width="24" height="24" viewBox="0 0 24 24"><path d="M4.500 2.500l13-2.500v12l-13 2z" fill="#303030" stroke="none" stroke-width="1" /><path d="M5.500 3.500l11-2v9.500l-11 1.700z" fill="#28d0f8" stroke="none" stroke-width="1" /><path d="M2 15l14-2.500v2l-14 2.500z" fill="#a0a0a0" stroke="none" stroke-width="1" /><path d="M4 6h-3v14h13" fill="none" stroke="#109810" stroke-width="1.4" /><rect x="14" y="6" width="10" height="12.5" fill="#484848" /><rect x="21" y="8" width="2" height="1.2" fill="#60e080" /><rect x="21" y="10.5" width="2" height="1.2" fill="#60e080" /><rect x="21" y="13" width="2" height="1.2" fill="#60e080" /><rect x="16" y="8" width="4" height="1" fill="#909090" /><rect x="16" y="10.5" width="4" height="1" fill="#909090" /><rect x="14" y="19" width="10" height="2.5" fill="#202020" /><rect x="14" y="22" width="10" height="2" fill="#303030" /><rect x="16" y="19.8" width="3" height="0.8" fill="#c0c0c0" /></svg>
<div class="t" style="left:35px;top:665px;font-weight:bold">连接目标</div>
<div class="t" style="left:401px;top:698px;font-size:12px;line-height:12px;height:12px;font-weight:bold">»</div>
<div style="left:403px;top:711px;width:0px;height:0px;border-left:3px solid transparent;border-right:3px solid transparent;border-top:3px solid #000;width:0;height:0"></div>
<div style="left:422px;top:146px;width:1498px;height:29px;background:linear-gradient(to bottom,#f1f1f7 0%,#f8f8fb 50%,#fdfdfe 100%)"></div>
<svg style="left:422px;top:146px" width="500" height="29" viewBox="0 0 500 29"><defs><linearGradient id="tg1" x1="0" y1="0" x2="0" y2="1"><stop offset="0" stop-color="#f8f8fb"/><stop offset="1" stop-color="#e4e4ee"/></linearGradient><linearGradient id="tg2" x1="0" y1="0" x2="0" y2="1"><stop offset="0" stop-color="#feeed2"/><stop offset="0.5" stop-color="#fcd596"/><stop offset="1" stop-color="#fbbc68"/></linearGradient></defs><path d="M4.500 28.500 L28 5 Q30 3.500 33 3.500 L240 3.500 Q246 3.500 248 7 L248 28.500 Z" fill="url(#tg1)" stroke="#2c4fa8" stroke-width="1"/><path d="M223.500 29.500 L248 5 Q250 3.500 253 3.500 L462 3.500 Q465.500 3.500 465.500 7 L465.500 29.500 Z" fill="url(#tg2)" stroke="#2c4fa8" stroke-width="1"/></svg>
<svg style="left:456px;top:154px" width="16" height="16" viewBox="0 0 16 16"><path d="M1 1.500l8.500-1.500l2 9.500l-8 3z" fill="#88c8f0" stroke="#a0b8d0" stroke-width="0.6" /><path d="M1 1.500l2.500 11l-1.500-0.500z" fill="#e0e8f0" stroke="none" stroke-width="1" /><rect x="4.5" y="6.5" width="11" height="8.5" fill="#fff" stroke="#2828e8" stroke-width="1"/><path d="M4.5 9.333333333333334h11M4.5 12.166666666666668h11M8.9 6.5v8.5" fill="none" stroke="#2828e8" stroke-width="1" /><rect x="9.9" y="10.333333333333334" width="4.6" height="1" fill="#b0b0b0" /></svg>
<div class="t" style="left:475px;top:152px;letter-spacing:-0.1px">局部标签设置 POU_01 [P...</div>
<svg style="left:676px;top:154px" width="16" height="16" viewBox="0 0 16 16"><defs><linearGradient id="stg" x1="0" y1="0" x2="1" y2="1"><stop offset="0" stop-color="#f4f6fa"/><stop offset="1" stop-color="#a8b0bc"/></linearGradient></defs><path d="M2 0.5h9l3 3v12h-12z" fill="url(#stg)" stroke="#5878a0" stroke-width="0.9" /><path d="M11 0.5v3h3" fill="#fff" stroke="#5878a0" stroke-width="0.7" /><text x="8.0" y="12.0" font-family="Liberation Sans,sans-serif" font-size="8.5" fill="#101010" font-weight="bold" text-anchor="middle" textLength="9.5" lengthAdjust="spacingAndGlyphs">ST</text></svg>
<div class="t" style="left:696px;top:152px;font-weight:bold;letter-spacing:0.1px">POU_01 [PRG] 程序...</div>
<div style="left:867px;top:154px;width:16px;height:16px;background:#fdf0dc;border:1px solid #b8a080"><svg style="left:3px;top:3px" width="8" height="8"><path d="M1 1l6 6M7 1l-6 6" stroke="#7a6a58" stroke-width="1.6"/></svg></div>
<svg style="left:1873px;top:155px" width="8" height="11" viewBox="0 0 8 11"><path d="M6.5 1.5v8l-5 -4z" fill="none" stroke="#000" stroke-width="1"/></svg>
<svg style="left:1890px;top:155px" width="8" height="11" viewBox="0 0 8 11"><path d="M1.5 1.5v8l5 -4z" fill="none" stroke="#000" stroke-width="1"/></svg>
<div style="left:1906px;top:160px;width:0;height:0;border-left:4px solid transparent;border-right:4px solid transparent;border-top:4px solid #000"></div>
<div style="left:422px;top:174px;width:1498px;height:551px;border:1px solid #3c64a8"></div>
<div style="left:423px;top:175px;width:1496px;height:549px;border:1px solid #ffc470"></div>
<div style="left:424px;top:176px;width:1494px;height:547px;border:1px solid;border-color:#8e8e8e #fff #fff #8e8e8e"></div>
<div style="left:425px;top:177px;width:1492px;height:545px;border:1px solid;border-color:#5e5e5e #fff #fff #5e5e5e;background:#a8a8cc"></div>
<div style="left:647px;top:174px;width:240px;height:1px;background:#fbbc68"></div>
<div style="left:426px;top:178px;width:745px;height:543px;background:linear-gradient(to bottom,#98b4d4 0px,#a6c0de 18px,#b6cee9 36px,#bcd2ea 40px,#bcd2ea 100%);border:1px solid #262626;border-color:#2c2c2c #000 #000 #2c2c2c;border-radius:6px 6px 0 0;box-shadow:inset 1px 1px 0 #fff, inset -1px -1px 0 #40e0ff"></div>
<svg style="left:439px;top:192px" width="16" height="18" viewBox="0 0 16 18"><defs><linearGradient id="stg" x1="0" y1="0" x2="1" y2="1"><stop offset="0" stop-color="#f4f6fa"/><stop offset="1" stop-color="#a8b0bc"/></linearGradient></defs><path d="M0.5 0.5h11l3 3v14h-14z" fill="url(#stg)" stroke="#5878a0" stroke-width="0.9" /><path d="M11.5 0.5v3h3" fill="#fff" stroke="#5878a0" stroke-width="0.7" /><text x="7.5" y="14.0" font-family="Liberation Sans,sans-serif" font-size="9.5" fill="#101010" font-weight="bold" text-anchor="middle" textLength="11.5" lengthAdjust="spacingAndGlyphs">ST</text></svg>
<div class="t" style="left:461px;top:190px;letter-spacing:-0.12px">POU_01 [PRG] 程序本体 [ST]</div>
<div style="left:1039px;top:189px;width:39px;height:22px;border:1px solid #5a6f8e;border-radius:3px;box-shadow:inset 0 0 0 1px rgba(255,255,255,.55);background:linear-gradient(to bottom,#c4d6ec 0%,#bcd0e8 46%,#9cb8d8 50%,#a4bedc 80%,#b4cce6 100%)"></div>
<div style="left:1052px;top:201px;width:14px;height:5px;background:#fff;border:1px solid #45556e;border-radius:1px"></div>
<div style="left:1080px;top:189px;width:39px;height:22px;border:1px solid #5a6f8e;border-radius:3px;box-shadow:inset 0 0 0 1px rgba(255,255,255,.55);background:linear-gradient(to bottom,#c4d6ec 0%,#bcd0e8 46%,#9cb8d8 50%,#a4bedc 80%,#b4cce6 100%)"></div>
<div style="left:1093px;top:194px;width:13px;height:12px;background:#fff;border:1px solid #45556e;border-radius:1px"><div style="left:3px;top:3px;width:5px;height:4px;border:1px solid #45556e;background:#b4c8e2"></div></div>
<div style="left:1121px;top:189px;width:39px;height:22px;border:1px solid #5a1a20;border-radius:3px;box-shadow:inset 0 0 0 1px rgba(255,255,255,.45);background:linear-gradient(to bottom,#eaa898 0%,#dc8470 46%,#c0401f 50%,#c8502c 75%,#de8468 100%)"></div>
<svg style="left:1133px;top:194px" width="14" height="13" viewBox="0 0 14 13"><path d="M3.500 3.500l7.500 6.500M11 3.500l-7.500 6.500" stroke="#4a3a4a" stroke-width="4.2" stroke-linecap="square"/><path d="M3.500 3.500l7.500 6.500M11 3.500l-7.500 6.500" stroke="#fff" stroke-width="2.500" stroke-linecap="square"/></svg>
<div style="left:436px;top:214px;width:726px;height:497px;background:#fff;border:1px solid;border-color:#6c6c6c #fff #fff #6c6c6c"></div>
<div style="left:437px;top:215px;width:19px;height:474px;background:#f0f0f0"></div>
<div class="code" style="left:457px;top:217px;letter-spacing:0.18px"><span class="g">(*number:=1;</span></div>
<div class="code" style="left:457px;top:251px;letter-spacing:0.04px"><span class="g">FOR number:=1 TO 10 BY 1     DO</span></div>
<div class="code" style="left:513px;top:285px;letter-spacing:-0.05px"><span class="g">IF data1 == data0  THEN</span></div>
<div class="code" style="left:547px;top:319px;letter-spacing:0.24px"><span class="g">xiangt :=xiangt +1;</span></div>
<div class="code" style="left:513px;top:353px;letter-spacing:-0.4px"><span class="g">END_IF; *)</span></div>
<div class="code" style="left:513px;top:387px;letter-spacing:0.06px"><span class="m">number</span><span class="k">:=</span><span class="k" style="margin-left:1.5px">1;</span></div>
<div class="code" style="left:513px;top:421px;letter-spacing:-0.11px"><span class="b">IF</span><span class="k"> (</span><span class="b">TRUE</span><span class="k">. (</span><span class="m">number</span><span class="k"> =1)) </span><span class="b">THEN</span></div>
<div class="code" style="left:540px;top:455px;letter-spacing:0.3px"><span class="m">data0</span><span class="k">:=1;</span></div>
<div class="code" style="left:513px;top:489px;letter-spacing:-0.37px"><span class="b">END_IF</span><span class="k">;</span></div>
<div style="left:633px;top:388px;width:1px;height:32px;background:#000"></div>
<svg style="left:444px;top:430px" width="11" height="15" viewBox="0 0 11 15"><path d="M1 1l9 6.5l-9 6.5z" fill="#ff0000" stroke="#800000" stroke-width="1"/></svg>
<div style="left:1139px;top:215px;width:21px;height:474px;background:#f8f8f8;background-image:repeating-conic-gradient(#fff 0 25%,#e8e8e8 0 50%);background-size:2px 2px"></div>
<div style="left:1139px;top:216px;width:21px;height:4px;background:#000"></div>
<div style="left:1139px;top:220px;width:21px;height:20px;background:#f0f0f0;border:1px solid;border-color:#fff #696969 #696969 #fff;box-shadow:inset -1px -1px 0 #a0a0a0;"></div>
<div style="left:1144px;top:227px;width:0;height:0;border-left:5px solid transparent;border-right:5px solid transparent;border-bottom:5px solid #000"></div>
<div style="left:1139px;top:240px;width:21px;height:297px;background:#f0f0f0;border:1px solid;border-color:#fff #696969 #696969 #fff;box-shadow:inset -1px -1px 0 #a0a0a0;"></div>
<div style="left:1139px;top:668px;width:21px;height:21px;background:#f0f0f0;border:1px solid;border-color:#fff #696969 #696969 #fff;box-shadow:inset -1px -1px 0 #a0a0a0;"></div>
<div style="left:1144px;top:677px;width:0;height:0;border-left:5px solid transparent;border-right:5px solid transparent;border-top:5px solid #000"></div>
<div style="left:437px;top:689px;width:702px;height:20px;background:#f8f8f8"></div>
<div style="left:437px;top:689px;width:20px;height:20px;background:#f0f0f0;border:1px solid;border-color:#fff #696969 #696969 #fff;box-shadow:inset -1px -1px 0 #a0a0a0;"></div>
<div style="left:442px;top:694px;width:0;height:0;border-top:5px solid transparent;border-bottom:5px solid transparent;border-right:5px solid #000"></div>
<div style="left:457px;top:689px;width:660px;height:20px;background:#f0f0f0;border:1px solid;border-color:#fff #696969 #696969 #fff;box-shadow:inset -1px -1px 0 #a0a0a0;"></div>
<div style="left:1119px;top:689px;width:20px;height:20px;background:#f0f0f0;border:1px solid;border-color:#fff #696969 #696969 #fff;box-shadow:inset -1px -1px 0 #a0a0a0;"></div>
<div style="left:1128px;top:694px;width:0;height:0;border-top:5px solid transparent;border-bottom:5px solid transparent;border-left:5px solid #000"></div>
<div style="left:1139px;top:689px;width:21px;height:20px;background:#fff"></div>
<div style="left:1171px;top:178px;width:745px;height:543px;background:linear-gradient(to bottom,#bccbdc 0px,#cddae9 18px,#d6e2f0 36px,#d9e5f2 40px,#d9e5f2 100%);border:1px solid #505050;border-radius:6px 6px 0 0;box-shadow:inset 0 0 0 1px #fafcff"></div>
<svg style="left:1182px;top:190px" width="20" height="20" viewBox="0 0 20 20"><g transform="scale(1.25)"><path d="M1 1.500l8.500-1.500l2 9.500l-8 3z" fill="#88c8f0" stroke="#a0b8d0" stroke-width="0.6" /><path d="M1 1.500l2.500 11l-1.500-0.500z" fill="#e0e8f0" stroke="none" stroke-width="1" /><rect x="4.5" y="6.5" width="11" height="8.5" fill="#fff" stroke="#2828e8" stroke-width="1"/><path d="M4.5 9.333333333333334h11M4.5 12.166666666666668h11M8.9 6.5v8.5" fill="none" stroke="#2828e8" stroke-width="1" /><rect x="9.9" y="10.333333333333334" width="4.6" height="1" fill="#b0b0b0" /></g></svg>
<div class="t" style="left:1206px;top:190px;color:#4c5a6a;letter-spacing:-0.25px">局部标签设置 POU_01 [PRG]</div>
<div style="left:1784px;top:189px;width:38px;height:21px;border:1px solid #8292ac;border-radius:3px;box-shadow:inset 0 0 0 1px rgba(255,255,255,.4);background:linear-gradient(to bottom,#c8d6e6 0%,#bfd0e2 50%,#b4c8de 51%,#c4d4e6 100%);"></div>
<div style="left:1796px;top:201px;width:14px;height:5px;background:#fff;border:1px solid #8a96a8;border-radius:1px"></div>
<div style="left:1825px;top:189px;width:38px;height:21px;border:1px solid #8292ac;border-radius:3px;box-shadow:inset 0 0 0 1px rgba(255,255,255,.4);background:linear-gradient(to bottom,#c8d6e6 0%,#bfd0e2 50%,#b4c8de 51%,#c4d4e6 100%);"></div>
<div style="left:1838px;top:194px;width:13px;height:12px;background:#fff;border:1px solid #8a96a8;border-radius:1px"><div style="left:3px;top:3px;width:5px;height:4px;border:1px solid #8a96a8;background:#bfd0e2"></div></div>
<div style="left:1866px;top:189px;width:38px;height:21px;border:1px solid #8292ac;border-radius:3px;box-shadow:inset 0 0 0 1px rgba(255,255,255,.4);background:linear-gradient(to bottom,#c8d6e6 0%,#bfd0e2 50%,#b4c8de 51%,#c4d4e6 100%);"></div>
<svg style="left:1878px;top:194px" width="14" height="13" viewBox="0 0 14 13"><path d="M3.500 3.500l7.500 6.500M11 3.500l-7.500 6.500" stroke="#8a96a8" stroke-width="4.2" stroke-linecap="square"/><path d="M3.500 3.500l7.500 6.500M11 3.500l-7.500 6.500" stroke="#fff" stroke-width="2.500" stroke-linecap="square"/></svg>
<div style="left:1181px;top:214px;width:723px;height:496px;background:#fff;border:1px solid;border-color:#6c6c6c #fff #fff #6c6c6c"></div>
<div style="left:1182px;top:215px;width:703px;height:20px;background:#f0f0f0"></div>
<div style="left:1182px;top:215px;width:51px;height:474px;background:#f0f0f0"></div>
<div style="left:1182px;top:215px;width:703px;height:474px;overflow:hidden"><div style="left:11px;top:0px;width:1px;height:19px;background:#a0a0a0"></div><div style="left:12px;top:0px;width:1px;height:19px;background:#fff"></div><div style="left:50px;top:0px;width:1px;height:19px;background:#a0a0a0"></div><div style="left:51px;top:0px;width:1px;height:19px;background:#fff"></div><div style="left:251px;top:0px;width:1px;height:19px;background:#a0a0a0"></div><div style="left:252px;top:0px;width:1px;height:19px;background:#fff"></div><div style="left:452px;top:0px;width:1px;height:19px;background:#a0a0a0"></div><div style="left:453px;top:0px;width:1px;height:19px;background:#fff"></div><div style="left:0px;top:19px;width:703px;height:1px;background:#a0a0a0"></div><div style="left:11px;top:19px;width:1px;height:455px;background:#a0a0a0"></div><div style="left:12px;top:19px;width:1px;height:455px;background:#fff"></div><div style="left:50px;top:19px;width:1px;height:455px;background:#a0a0a0"></div><div style="left:251px;top:20px;width:1px;height:454px;background:#000"></div><div style="left:452px;top:20px;width:1px;height:454px;background:#000"></div><div style="left:0px;top:38px;width:50px;height:1px;background:#a0a0a0"></div><div style="left:0px;top:39px;width:50px;height:1px;background:#fff"></div><div style="left:51px;top:38px;width:652px;height:1px;background:#000"></div><div style="left:231px;top:20px;width:20px;height:18px;background:#f0f0f0"></div><div style="left:234px;top:28px;width:0;height:0;border-left:5px solid transparent;border-right:5px solid transparent;border-top:5px solid #000"></div><div style="left:0px;top:57px;width:50px;height:1px;background:#a0a0a0"></div><div style="left:0px;top:58px;width:50px;height:1px;background:#fff"></div><div style="left:51px;top:57px;width:652px;height:1px;background:#000"></div><div style="left:231px;top:39px;width:20px;height:18px;background:#f0f0f0"></div><div style="left:234px;top:47px;width:0;height:0;border-left:5px solid transparent;border-right:5px solid transparent;border-top:5px solid #000"></div><div style="left:0px;top:76px;width:50px;height:1px;background:#a0a0a0"></div><div style="left:0px;top:77px;width:50px;height:1px;background:#fff"></div><div style="left:51px;top:76px;width:652px;height:1px;background:#000"></div><div style="left:231px;top:58px;width:20px;height:18px;background:#f0f0f0"></div><div style="left:234px;top:66px;width:0;height:0;border-left:5px solid transparent;border-right:5px solid transparent;border-top:5px solid #000"></div><div style="left:0px;top:95px;width:50px;height:1px;background:#a0a0a0"></div><div style="left:0px;top:96px;width:50px;height:1px;background:#fff"></div><div style="left:51px;top:95px;width:652px;height:1px;background:#000"></div><div style="left:231px;top:77px;width:20px;height:18px;background:#f0f0f0"></div><div style="left:234px;top:85px;width:0;height:0;border-left:5px solid transparent;border-right:5px solid transparent;border-top:5px solid #000"></div><div style="left:0px;top:114px;width:50px;height:1px;background:#a0a0a0"></div><div style="left:0px;top:115px;width:50px;height:1px;background:#fff"></div><div style="left:51px;top:114px;width:652px;height:1px;background:#000"></div><div style="left:231px;top:96px;width:20px;height:18px;background:#f0f0f0"></div><div style="left:234px;top:104px;width:0;height:0;border-left:5px solid transparent;border-right:5px solid transparent;border-top:5px solid #000"></div><div style="left:0px;top:133px;width:50px;height:1px;background:#a0a0a0"></div><div style="left:0px;top:134px;width:50px;height:1px;background:#fff"></div><div style="left:51px;top:133px;width:652px;height:1px;background:#000"></div><div style="left:231px;top:115px;width:20px;height:18px;background:#f0f0f0"></div><div style="left:234px;top:123px;width:0;height:0;border-left:5px solid transparent;border-right:5px solid transparent;border-top:5px solid #000"></div><div style="left:0px;top:152px;width:50px;height:1px;background:#a0a0a0"></div><div style="left:0px;top:153px;width:50px;height:1px;background:#fff"></div><div style="left:51px;top:152px;width:652px;height:1px;background:#000"></div><div style="left:231px;top:134px;width:20px;height:18px;background:#f0f0f0"></div><div style="left:234px;top:142px;width:0;height:0;border-left:5px solid transparent;border-right:5px solid transparent;border-top:5px solid #000"></div><div style="left:0px;top:171px;width:50px;height:1px;background:#a0a0a0"></div><div style="left:0px;top:172px;width:50px;height:1px;background:#fff"></div><div style="left:51px;top:171px;width:652px;height:1px;background:#000"></div><div style="left:231px;top:153px;width:20px;height:18px;background:#f0f0f0"></div><div style="left:234px;top:161px;width:0;height:0;border-left:5px solid transparent;border-right:5px solid transparent;border-top:5px solid #000"></div><div style="left:0px;top:190px;width:50px;height:1px;background:#a0a0a0"></div><div style="left:0px;top:191px;width:50px;height:1px;background:#fff"></div><div style="left:51px;top:190px;width:652px;height:1px;background:#000"></div><div style="left:231px;top:172px;width:20px;height:18px;background:#f0f0f0"></div><div style="left:234px;top:180px;width:0;height:0;border-left:5px solid transparent;border-right:5px solid transparent;border-top:5px solid #000"></div><div style="left:0px;top:209px;width:50px;height:1px;background:#a0a0a0"></div><div style="left:0px;top:210px;width:50px;height:1px;background:#fff"></div><div style="left:51px;top:209px;width:652px;height:1px;background:#000"></div><div style="left:231px;top:191px;width:20px;height:18px;background:#f0f0f0"></div><div style="left:234px;top:199px;width:0;height:0;border-left:5px solid transparent;border-right:5px solid transparent;border-top:5px solid #000"></div><div style="left:0px;top:228px;width:50px;height:1px;background:#a0a0a0"></div><div style="left:0px;top:229px;width:50px;height:1px;background:#fff"></div><div style="left:51px;top:228px;width:652px;height:1px;background:#000"></div><div style="left:231px;top:210px;width:20px;height:18px;background:#f0f0f0"></div><div style="left:234px;top:218px;width:0;height:0;border-left:5px solid transparent;border-right:5px solid transparent;border-top:5px solid #000"></div><div style="left:0px;top:247px;width:50px;height:1px;background:#a0a0a0"></div><div style="left:0px;top:248px;width:50px;height:1px;background:#fff"></div><div style="left:51px;top:247px;width:652px;height:1px;background:#000"></div><div style="left:231px;top:229px;width:20px;height:18px;background:#f0f0f0"></div><div style="left:234px;top:237px;width:0;height:0;border-left:5px solid transparent;border-right:5px solid transparent;border-top:5px solid #000"></div><div style="left:0px;top:266px;width:50px;height:1px;background:#a0a0a0"></div><div style="left:0px;top:267px;width:50px;height:1px;background:#fff"></div><div style="left:51px;top:266px;width:652px;height:1px;background:#000"></div><div style="left:231px;top:248px;width:20px;height:18px;background:#f0f0f0"></div><div style="left:234px;top:256px;width:0;height:0;border-left:5px solid transparent;border-right:5px solid transparent;border-top:5px solid #000"></div><div style="left:0px;top:285px;width:50px;height:1px;background:#a0a0a0"></div><div style="left:0px;top:286px;width:50px;height:1px;background:#fff"></div><div style="left:51px;top:285px;width:652px;height:1px;background:#000"></div><div style="left:231px;top:267px;width:20px;height:18px;background:#f0f0f0"></div><div style="left:234px;top:275px;width:0;height:0;border-left:5px solid transparent;border-right:5px solid transparent;border-top:5px solid #000"></div><div style="left:0px;top:304px;width:50px;height:1px;background:#a0a0a0"></div><div style="left:0px;top:305px;width:50px;height:1px;background:#fff"></div><div style="left:51px;top:304px;width:652px;height:1px;background:#000"></div><div style="left:231px;top:286px;width:20px;height:18px;background:#f0f0f0"></div><div style="left:234px;top:294px;width:0;height:0;border-left:5px solid transparent;border-right:5px solid transparent;border-top:5px solid #000"></div><div style="left:0px;top:323px;width:50px;height:1px;background:#a0a0a0"></div><div style="left:0px;top:324px;width:50px;height:1px;background:#fff"></div><div style="left:51px;top:323px;width:652px;height:1px;background:#000"></div><div style="left:231px;top:305px;width:20px;height:18px;background:#f0f0f0"></div><div style="left:234px;top:313px;width:0;height:0;border-left:5px solid transparent;border-right:5px solid transparent;border-top:5px solid #000"></div><div style="left:0px;top:342px;width:50px;height:1px;background:#a0a0a0"></div><div style="left:0px;top:343px;width:50px;height:1px;background:#fff"></div><div style="left:51px;top:342px;width:652px;height:1px;background:#000"></div><div style="left:231px;top:324px;width:20px;height:18px;background:#f0f0f0"></div><div style="left:234px;top:332px;width:0;height:0;border-left:5px solid transparent;border-right:5px solid transparent;border-top:5px solid #000"></div><div style="left:0px;top:361px;width:50px;height:1px;background:#a0a0a0"></div><div style="left:0px;top:362px;width:50px;height:1px;background:#fff"></div><div style="left:51px;top:361px;width:652px;height:1px;background:#000"></div><div style="left:231px;top:343px;width:20px;height:18px;background:#f0f0f0"></div><div style="left:234px;top:351px;width:0;height:0;border-left:5px solid transparent;border-right:5px solid transparent;border-top:5px solid #000"></div><div style="left:0px;top:380px;width:50px;height:1px;background:#a0a0a0"></div><div style="left:0px;top:381px;width:50px;height:1px;background:#fff"></div><div style="left:51px;top:380px;width:652px;height:1px;background:#000"></div><div style="left:231px;top:362px;width:20px;height:18px;background:#f0f0f0"></div><div style="left:234px;top:370px;width:0;height:0;border-left:5px solid transparent;border-right:5px solid transparent;border-top:5px solid #000"></div><div style="left:0px;top:399px;width:50px;height:1px;background:#a0a0a0"></div><div style="left:0px;top:400px;width:50px;height:1px;background:#fff"></div><div style="left:51px;top:399px;width:652px;height:1px;background:#000"></div><div style="left:231px;top:381px;width:20px;height:18px;background:#f0f0f0"></div><div style="left:234px;top:389px;width:0;height:0;border-left:5px solid transparent;border-right:5px solid transparent;border-top:5px solid #000"></div><div style="left:0px;top:418px;width:50px;height:1px;background:#a0a0a0"></div><div style="left:0px;top:419px;width:50px;height:1px;background:#fff"></div><div style="left:51px;top:418px;width:652px;height:1px;background:#000"></div><div style="left:231px;top:400px;width:20px;height:18px;background:#f0f0f0"></div><div style="left:234px;top:408px;width:0;height:0;border-left:5px solid transparent;border-right:5px solid transparent;border-top:5px solid #000"></div><div style="left:0px;top:437px;width:50px;height:1px;background:#a0a0a0"></div><div style="left:0px;top:438px;width:50px;height:1px;background:#fff"></div><div style="left:51px;top:437px;width:652px;height:1px;background:#000"></div><div style="left:231px;top:419px;width:20px;height:18px;background:#f0f0f0"></div><div style="left:234px;top:427px;width:0;height:0;border-left:5px solid transparent;border-right:5px solid transparent;border-top:5px solid #000"></div><div style="left:0px;top:456px;width:50px;height:1px;background:#a0a0a0"></div><div style="left:0px;top:457px;width:50px;height:1px;background:#fff"></div><div style="left:51px;top:456px;width:652px;height:1px;background:#000"></div><div style="left:231px;top:438px;width:20px;height:18px;background:#f0f0f0"></div><div style="left:234px;top:446px;width:0;height:0;border-left:5px solid transparent;border-right:5px solid transparent;border-top:5px solid #000"></div><div style="left:231px;top:457px;width:20px;height:17px;background:#f0f0f0"></div><div style="left:234px;top:465px;width:0;height:0;border-left:5px solid transparent;border-right:5px solid transparent;border-top:5px solid #000"></div><div style="left:251px;top:228px;width:202px;height:20px;border:1px solid #000;box-shadow:inset 0 0 0 1px #fff, inset 0 0 0 2px #000;"></div><div class="t gt" style="left:13px;top:19px;width:36px;text-align:center">5</div><div class="t gt" style="left:53px;top:19px">VAR</div><div class="t gt" style="left:254px;top:19px">data5</div><div class="t gt" style="left:455px;top:19px">Word[Signed]</div><div class="t gt" style="left:13px;top:38px;width:36px;text-align:center">6</div><div class="t gt" style="left:53px;top:38px">VAR</div><div class="t gt" style="left:254px;top:38px">data6</div><div class="t gt" style="left:455px;top:38px">Word[Signed]</div><div class="t gt" style="left:13px;top:57px;width:36px;text-align:center">7</div><div class="t gt" style="left:53px;top:57px">VAR</div><div class="t gt" style="left:254px;top:57px">data7</div><div class="t gt" style="left:455px;top:57px">Word[Signed]</div><div class="t gt" style="left:13px;top:76px;width:36px;text-align:center">8</div><div class="t gt" style="left:53px;top:76px">VAR</div><div class="t gt" style="left:254px;top:76px">data8</div><div class="t gt" style="left:455px;top:76px">Word[Signed]</div><div class="t gt" style="left:13px;top:95px;width:36px;text-align:center">9</div><div class="t gt" style="left:53px;top:95px">VAR</div><div class="t gt" style="left:254px;top:95px">data9</div><div class="t gt" style="left:455px;top:95px">Word[Signed]</div><div class="t gt" style="left:13px;top:114px;width:36px;text-align:center">10</div><div class="t gt" style="left:53px;top:114px">VAR</div><div class="t gt" style="left:254px;top:114px">data10</div><div class="t gt" style="left:455px;top:114px">Word[Signed]</div><div class="t gt" style="left:13px;top:133px;width:36px;text-align:center">11</div><div class="t gt" style="left:13px;top:152px;width:36px;text-align:center">12</div><div class="t gt" style="left:13px;top:171px;width:36px;text-align:center">13</div><div class="t gt" style="left:53px;top:171px">VAR</div><div class="t gt" style="left:254px;top:171px">data0</div><div class="t gt" style="left:455px;top:171px">Word[Signed]</div><div class="t gt" style="left:13px;top:190px;width:36px;text-align:center">14</div><div class="t gt" style="left:53px;top:190px">VAR</div><div class="t gt" style="left:254px;top:190px">number</div><div class="t gt" style="left:455px;top:190px">Word[Signed]</div><div class="t gt" style="left:13px;top:209px;width:36px;text-align:center">15</div><div class="t gt" style="left:13px;top:228px;width:36px;text-align:center">16</div><div class="t gt" style="left:53px;top:228px">VAR</div><div class="t gt" style="left:254px;top:228px">xiangt</div><div class="t gt" style="left:455px;top:228px">Word[Signed]</div><div class="t gt" style="left:13px;top:247px;width:36px;text-align:center">17</div><div class="t gt" style="left:13px;top:266px;width:36px;text-align:center">18</div><div class="t gt" style="left:13px;top:285px;width:36px;text-align:center">19</div><div class="t gt" style="left:13px;top:304px;width:36px;text-align:center">20</div><div class="t gt" style="left:13px;top:323px;width:36px;text-align:center">21</div><div class="t gt" style="left:13px;top:342px;width:36px;text-align:center">22</div><div class="t gt" style="left:13px;top:361px;width:36px;text-align:center">23</div><div class="t gt" style="left:13px;top:380px;width:36px;text-align:center">24</div><div class="t gt" style="left:13px;top:399px;width:36px;text-align:center">25</div><div class="t gt" style="left:13px;top:418px;width:36px;text-align:center">26</div><div class="t gt" style="left:13px;top:437px;width:36px;text-align:center">27</div><div class="t gt" style="left:13px;top:456px;width:36px;text-align:center">28</div><div class="t" style="left:51px;top:-1px;width:200px;text-align:center;font-size:15.5px">类</div><div class="t" style="left:252px;top:-1px;width:200px;text-align:center;font-size:15.5px">标签名</div><div class="t" style="left:453px;top:-1px;width:300px;text-align:center;font-size:15.5px">数据类型</div></div>
<div style="left:1885px;top:215px;width:19px;height:474px;background:#f8f8f8;background-image:repeating-conic-gradient(#fff 0 25%,#e8e8e8 0 50%);background-size:2px 2px"></div>
<div style="left:1885px;top:215px;width:19px;height:19px;background:#f0f0f0;border:1px solid;border-color:#fff #696969 #696969 #fff;box-shadow:inset -1px -1px 0 #a0a0a0;"></div>
<div style="left:1889px;top:221px;width:0;height:0;border-left:5px solid transparent;border-right:5px solid transparent;border-bottom:5px solid #000"></div>
<div style="left:1885px;top:234px;width:19px;height:10px;background:#f0f0f0;border:1px solid;border-color:#fff #696969 #696969 #fff;box-shadow:inset -1px -1px 0 #a0a0a0;"></div>
<div style="left:1885px;top:670px;width:19px;height:19px;background:#f0f0f0;border:1px solid;border-color:#fff #696969 #696969 #fff;box-shadow:inset -1px -1px 0 #a0a0a0;"></div>
<div style="left:1889px;top:678px;width:0;height:0;border-left:5px solid transparent;border-right:5px solid transparent;border-top:5px solid #000"></div>
<div style="left:1182px;top:689px;width:703px;height:20px;background:#f8f8f8;background-image:repeating-conic-gradient(#fff 0 25%,#e8e8e8 0 50%);background-size:2px 2px"></div>
<div style="left:1182px;top:689px;width:20px;height:20px;background:#f0f0f0;border:1px solid;border-color:#fff #696969 #696969 #fff;box-shadow:inset -1px -1px 0 #a0a0a0;"></div>
<div style="left:1187px;top:694px;width:0;height:0;border-top:5px solid transparent;border-bottom:5px solid transparent;border-right:5px solid #000"></div>
<div style="left:1202px;top:689px;width:248px;height:20px;background:#f0f0f0;border:1px solid;border-color:#fff #696969 #696969 #fff;box-shadow:inset -1px -1px 0 #a0a0a0;"></div>
<div style="left:1865px;top:689px;width:20px;height:20px;background:#f0f0f0;border:1px solid;border-color:#fff #696969 #696969 #fff;box-shadow:inset -1px -1px 0 #a0a0a0;"></div>
<div style="left:1874px;top:694px;width:0;height:0;border-top:5px solid transparent;border-bottom:5px solid transparent;border-left:5px solid #000"></div>
<div style="left:1885px;top:689px;width:19px;height:20px;background:#c8c8c8"></div>
<div style="left:0px;top:725px;width:1920px;height:4px;background:linear-gradient(to right,#d6d6e4,#f3f3f7)"></div>
<div style="left:1px;top:729px;width:1918px;height:30px;background:linear-gradient(to bottom,#f8f8fc 0%,#e8e8f2 30%,#dcdce8 50%,#bcbcd2 75%,#a2a2be 100%);border-radius:5px"></div>
<div class="grip" style="left:5px;top:734px;width:3px;height:20px;"></div>
<div class="t" style="left:14px;top:734px;">输出</div>
<svg style="left:1888px;top:738px" width="9" height="11" viewBox="0 0 9 11"><rect x="2" y="1" width="5" height="5" fill="#000"/><rect x="3" y="2" width="1" height="3.500" fill="#fff"/><rect x="1" y="6" width="7" height="1" fill="#000"/><rect x="4" y="7" width="1" height="3" fill="#000"/></svg>
<svg style="left:1904px;top:740px" width="8" height="7" viewBox="0 0 8 7"><path d="M0.800 0.800l6.400 5.400M7.200 0.800l-6.400 5.400" stroke="#000" stroke-width="1.700" fill="none"/></svg>
<div style="left:0px;top:759px;width:1920px;height:276px;background:#f0f0f0"></div>
<div style="left:3px;top:762px;width:1914px;height:17px;border:1px solid;border-color:#a0a0a0 #fff #fff #a0a0a0"></div>
<div class="song" style="left:4px;top:762px">全部编译</div>
<div style="left:3px;top:783px;width:1915px;height:226px;background:#ababab;border:1px solid;border-color:#a0a0a0 #fff #fff #a0a0a0"></div>
<div style="left:4px;top:784px;width:1913px;height:224px;border:1px solid;border-color:#696969 #e3e3e3 #e3e3e3 #696969"></div>
<div style="left:5px;top:785px;width:1910px;height:36px;background:#f0f0f0"></div>
<div style="left:34px;top:785px;width:1px;height:18px;background:#a0a0a0"></div>
<div style="left:35px;top:785px;width:1px;height:18px;background:#fff"></div>
<div class="song" style="left:8px;top:785px"><i>No.</i></div>
<div style="left:114px;top:785px;width:1px;height:18px;background:#a0a0a0"></div>
<div style="left:115px;top:785px;width:1px;height:18px;background:#fff"></div>
<div class="song" style="left:38px;top:785px">结果</div>
<div style="left:264px;top:785px;width:1px;height:18px;background:#a0a0a0"></div>
<div style="left:265px;top:785px;width:1px;height:18px;background:#fff"></div>
<div class="song" style="left:118px;top:785px">数据名</div>
<div style="left:414px;top:785px;width:1px;height:18px;background:#a0a0a0"></div>
<div style="left:415px;top:785px;width:1px;height:18px;background:#fff"></div>
<div class="song" style="left:268px;top:785px">分类</div>
<div style="left:1180px;top:785px;width:1px;height:18px;background:#a0a0a0"></div>
<div style="left:1181px;top:785px;width:1px;height:18px;background:#fff"></div>
<div class="song" style="left:418px;top:785px">内容</div>
<div style="left:1260px;top:785px;width:1px;height:18px;background:#a0a0a0"></div>
<div style="left:1261px;top:785px;width:1px;height:18px;background:#fff"></div>
<div class="song" style="left:1184px;top:785px">错误代码</div>
<div style="left:5px;top:802px;width:1910px;height:1px;background:#a0a0a0"></div>
<div style="left:1913px;top:785px;width:1px;height:18px;background:#a0a0a0"></div>
<div class="song" style="left:23px;top:803px"><i>1</i></div>
<div class="song" style="left:37px;top:803px"><i>Error</i></div>
<div class="song" style="left:117px;top:803px"><i>POU_01</i></div>
<div class="song" style="left:268px;top:803px">编译程序</div>
<div class="song" style="left:418px;top:803px">无法解析语法。</div>
<div class="song" style="left:1183px;top:803px"><i>C1200</i></div>
<div style="left:3px;top:1012px;width:1914px;height:19px;border:1px solid;border-color:#a0a0a0 #fff #fff #a0a0a0"></div>
<div class="song" style="left:4px;top:1012px">已完成全部编译。<i>Error: 1, Warning: 0, CheckWarning: 0</i></div>
<div style="left:0px;top:1033px;width:1920px;height:1px;background:#a0a0a0"></div>
<div style="left:0px;top:1034px;width:1920px;height:18px;background:#f0edec;border-top:1px solid #fff"></div>
<div style="left:0px;top:1052px;width:1920px;height:1px;background:#fff"></div>
<div style="left:0px;top:1053px;width:1920px;height:1px;background:#5a5048"></div>
<div style="left:0px;top:1054px;width:1920px;height:1px;background:#f8e4d4"></div>
<div style="left:859px;top:1035px;width:1px;height:18px;background:#d0d0d0"></div>
<div style="left:957px;top:1035px;width:1px;height:18px;background:#d0d0d0"></div>
<div style="left:1045px;top:1035px;width:1px;height:18px;background:#d0d0d0"></div>
<div style="left:1293px;top:1035px;width:1px;height:18px;background:#d0d0d0"></div>
<div style="left:1400px;top:1035px;width:1px;height:18px;background:#d0d0d0"></div>
<div style="left:1608px;top:1035px;width:1px;height:18px;background:#d0d0d0"></div>
<div style="left:1777px;top:1035px;width:1px;height:18px;background:#d0d0d0"></div>
<div style="left:1834px;top:1035px;width:1px;height:18px;background:#d0d0d0"></div>
<div style="left:1877px;top:1035px;width:1px;height:18px;background:#d0d0d0"></div>
<div class="t" style="left:865px;top:1036px;color:#000">简体中文</div>
<div class="t" style="left:963px;top:1036px;color:#000">结构化</div>
<div class="t" style="left:1299px;top:1036px;color:#000">Q06H</div>
<div class="t" style="left:1406px;top:1036px;color:#000">本站</div>
<div class="t" style="left:1614px;top:1036px;color:#000">行: 6</div>
<div class="t" style="left:1782px;top:1036px;color:#000">插入</div>
<div class="t" style="left:1840px;top:1036px;color:#a0a0a0">大写</div>
<div class="t" style="left:1882px;top:1036px;color:#000">数字</div>
</body></html>
